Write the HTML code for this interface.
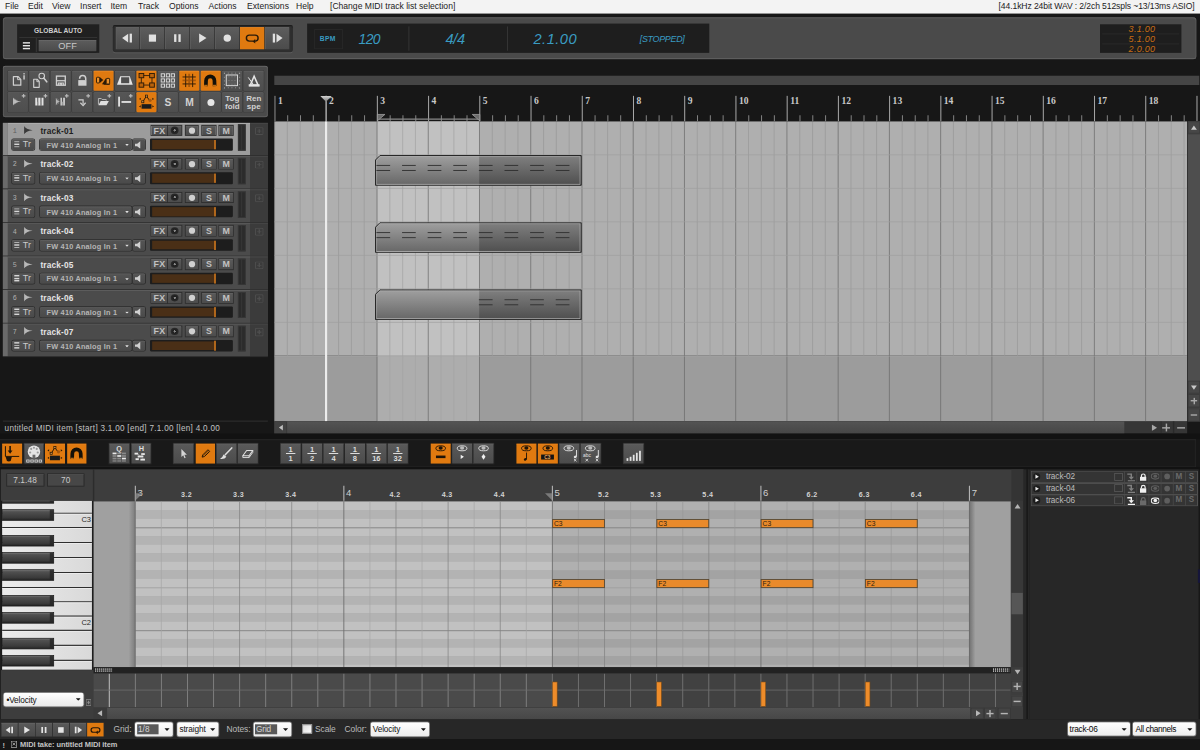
<!DOCTYPE html>
<html><head><meta charset="utf-8"><title>DAW</title><style>
html,body{margin:0;padding:0;background:#171717;overflow:hidden}
body{width:1200px;height:750px;position:relative}
#root{position:absolute;left:0;top:0;width:1680px;height:1050px;transform:scale(0.7142857);transform-origin:0 0;overflow:hidden;background:#171717;font-family:"Liberation Sans",sans-serif}
#root div,#root span,#root svg{position:absolute;box-sizing:border-box}
#root span{white-space:nowrap;line-height:1.15}
.menu{font:12px/17px "Liberation Sans",sans-serif;color:#1c1c1c}
</style></head><body><div id="root">
<!-- p1 -->
<div style="left:0px;top:0px;width:1680px;height:18.9px;background:#f3f3f3"></div>
<span class="menu" style="left:7px;top:2.1px;">File</span>
<span class="menu" style="left:39.2px;top:2.1px;">Edit</span>
<span class="menu" style="left:72.8px;top:2.1px;">View</span>
<span class="menu" style="left:112px;top:2.1px;">Insert</span>
<span class="menu" style="left:154.7px;top:2.1px;">Item</span>
<span class="menu" style="left:193.2px;top:2.1px;">Track</span>
<span class="menu" style="left:236.6px;top:2.1px;">Options</span>
<span class="menu" style="left:291.9px;top:2.1px;">Actions</span>
<span class="menu" style="left:345.8px;top:2.1px;">Extensions</span>
<span class="menu" style="left:414.4px;top:2.1px;">Help</span>
<span class="menu" style="left:462px;top:2.1px;">[Change MIDI track list selection]</span>
<span class="menu" style="right:7.7px;top:2.1px;letter-spacing:-0.14px">[44.1kHz 24bit WAV : 2/2ch 512spls ~13/13ms ASIO]</span>
<div style="left:4.2px;top:24.22px;width:1670.62px;height:58.66px;background:#4a4a4a;border-radius:5px;box-shadow:inset 0 1.4px 0 #626262, inset 1.4px 0 0 #585858, inset -1.4px 0 0 #585858,inset 0 -1.4px 0 #646464"></div>
<div style="left:24.22px;top:33.6px;width:114.38px;height:40.6px;background:#202020"></div>
<span style="left:24.22px;top:37.8px;width:114.38px;text-align:center;font:bold 9.3px 'Liberation Sans',sans-serif;color:#d0d0d0">GLOBAL AUTO</span>
<div style="left:26.6px;top:52.08px;width:109.2px;height:1.12px;background:#3a3a3a"></div>
<div style="left:50.4px;top:53.2px;width:1.12px;height:19.6px;background:#333"></div>
<div style="left:32.48px;top:58.52px;width:9.8px;height:2.1px;background:#e4e4e4"></div>
<div style="left:32.48px;top:62.58px;width:9.8px;height:2.1px;background:#e4e4e4"></div>
<div style="left:32.48px;top:66.64px;width:9.8px;height:2.1px;background:#e4e4e4"></div>
<div style="left:54.04px;top:56px;width:81.2px;height:15.68px;background:linear-gradient(#5c5c5c,#4b4b4b);box-shadow:inset 0 1px 0 #6a6a6a,0 1px 0 #111;"></div>
<span style="left:54.04px;top:55.86px;width:81.2px;text-align:center;font:13px 'Liberation Sans',sans-serif;color:#c8c8c8">OFF</span>
<div style="left:158.2px;top:35px;width:251.44px;height:37.52px;background:#2f2f2f;border-radius:3px;box-shadow:0 1.4px 0 #5e5e5e, inset 0 1.4px 2px #1a1a1a"></div>
<div style="left:161.56px;top:37.8px;width:33.88px;height:31.08px;background:linear-gradient(#5d5d5d,#4b4b4b);box-shadow:inset 0 1px 0 #6c6c6c, inset 1px 0 0 #606060"></div>
<div style="left:196.49px;top:37.8px;width:33.88px;height:31.08px;background:linear-gradient(#5d5d5d,#4b4b4b);box-shadow:inset 0 1px 0 #6c6c6c, inset 1px 0 0 #606060"></div>
<div style="left:231.42px;top:37.8px;width:33.88px;height:31.08px;background:linear-gradient(#5d5d5d,#4b4b4b);box-shadow:inset 0 1px 0 #6c6c6c, inset 1px 0 0 #606060"></div>
<div style="left:266.35px;top:37.8px;width:33.88px;height:31.08px;background:linear-gradient(#5d5d5d,#4b4b4b);box-shadow:inset 0 1px 0 #6c6c6c, inset 1px 0 0 #606060"></div>
<div style="left:301.28px;top:37.8px;width:33.88px;height:31.08px;background:linear-gradient(#5d5d5d,#4b4b4b);box-shadow:inset 0 1px 0 #6c6c6c, inset 1px 0 0 #606060"></div>
<div style="left:336.21px;top:37.8px;width:33.88px;height:31.08px;background:#e07a10;box-shadow:inset 0 1px 0 #f09030"></div>
<div style="left:371.14px;top:37.8px;width:33.88px;height:31.08px;background:linear-gradient(#5d5d5d,#4b4b4b);box-shadow:inset 0 1px 0 #6c6c6c, inset 1px 0 0 #606060"></div>
<svg style="left:0;top:0" width="600" height="90" viewBox="0 0 600 90"><path d="M171.0 53.339999999999996 L179.5 47.13999999999999 L179.5 59.54Z" fill="#e0e0e0"/><rect x="181.5" y="47.13999999999999" width="3.2" height="12.4" fill="#e0e0e0"/><rect x="208.42999999999998" y="48.339999999999996" width="10" height="10" fill="#e0e0e0"/><rect x="243.76" y="47.94" width="3.2" height="10.8" fill="#e0e0e0"/><rect x="249.76" y="47.94" width="3.2" height="10.8" fill="#e0e0e0"/><path d="M278.78999999999996 46.739999999999995 L289.09 53.339999999999996 L278.78999999999996 59.94Z" fill="#e0e0e0"/><circle cx="318.21999999999997" cy="53.339999999999996" r="5.2" fill="#e0e0e0"/><path d="M354.15 57.54 H349.15 a4.2 4.2 0 0 1 0 -8.4 H357.15 a4.2 4.2 0 0 1 0 8.4 H356.34999999999997" fill="none" stroke="#2a1a08" stroke-width="2"/><path d="M357.34999999999997 54.54 L353.34999999999997 57.739999999999995 L357.34999999999997 60.739999999999995Z" fill="#2a1a08"/><path d="M395.58000000000004 53.339999999999996 L387.08000000000004 47.13999999999999 L387.08000000000004 59.54Z" fill="#e0e0e0"/><rect x="381.88000000000005" y="47.13999999999999" width="3.2" height="12.4" fill="#e0e0e0"/></svg>
<div style="left:429.52px;top:33.32px;width:563.08px;height:40.46px;background:#1e1e1e"></div>
<div style="left:439.6px;top:40.6px;width:40.6px;height:28px;box-shadow:inset 0 0 0 1px #2b2b2b"></div>
<span style="left:447.72px;top:49.84px;font-style:italic;color:#3a9cc2;font-family:'Liberation Sans',sans-serif;font-style:normal;font-weight:bold;font-size:9.4px;letter-spacing:0.5px">BPM</span>
<span style="left:501.9px;top:42.28px;font-style:italic;color:#3a9cc2;font-family:'Liberation Sans',sans-serif;font-size:20.5px;letter-spacing:-1px;transform:scaleX(0.95);transform-origin:0 0">120</span>
<div style="left:571.62px;top:36.96px;width:1.26px;height:34.44px;background:#3e3e3e"></div>
<span style="left:623.7px;top:42.28px;font-style:italic;color:#3a9cc2;font-family:'Liberation Sans',sans-serif;font-size:20.5px;letter-spacing:-0.5px;">4/4</span>
<div style="left:710.22px;top:36.96px;width:1.26px;height:34.44px;background:#3e3e3e"></div>
<span style="left:746.9px;top:42.28px;font-style:italic;color:#3a9cc2;font-family:'Liberation Sans',sans-serif;font-size:20.5px;letter-spacing:0.65px;">2.1.00</span>
<span style="left:895.72px;top:48.16px;font-style:italic;color:#3a9cc2;font-family:'Liberation Sans',sans-serif;font-size:12.6px;letter-spacing:-0.5px;">[STOPPED]</span>
<div style="left:1540px;top:33.6px;width:114.24px;height:40.6px;background:#1e1e1e"></div>
<div style="left:1542.8px;top:46.76px;width:108.64px;height:0.98px;background:#2e2e2e"></div>
<div style="left:1542.8px;top:60.76px;width:108.64px;height:0.98px;background:#2e2e2e"></div>
<span style="left:1580.04px;top:34.16px;font-style:italic;color:#c86c14;font-family:'Liberation Sans',sans-serif;font-size:12.6px;letter-spacing:0.4px;">3.1.00</span>
<span style="left:1580.04px;top:48.16px;font-style:italic;color:#c86c14;font-family:'Liberation Sans',sans-serif;font-size:12.6px;letter-spacing:0.4px;">5.1.00</span>
<span style="left:1580.04px;top:62.16px;font-style:italic;color:#c86c14;font-family:'Liberation Sans',sans-serif;font-size:12.6px;letter-spacing:0.4px;">2.0.00</span>
<!-- p2 -->
<div style="left:4.2px;top:91.98px;width:371.28px;height:71.82px;background:#4a4a4a;border-radius:4px;box-shadow:inset 0 1.4px 0 #666, inset 1.4px 0 0 #5a5a5a, inset -1.4px 0 0 #5a5a5a, inset 0 -1.4px 0 #606060"></div>
<div style="left:11.06px;top:99.26px;width:28.28px;height:27.86px;background:linear-gradient(#565656,#4e4e4e);border-radius:1.5px;box-shadow:0 0 0 1px #3c3c3c, inset 0 1px 0 #626262"><svg style="left:0;top:0" width="100%" height="100%" viewBox="0 0 28 28"><path d="M7.6 8.2H14L18 12.2V20.4H7.6Z" fill="none" stroke="#cfcfcf" stroke-width="1.7" stroke-linejoin="round"/><path d="M13.6 8.4V12.6H17.8" fill="none" stroke="#cfcfcf" stroke-width="1.4"/><rect x="21.6" y="6.4" width="2" height="6" fill="#cfcfcf"/><rect x="21.6" y="3.4" width="2" height="1.8" fill="#cfcfcf"/></svg></div>
<div style="left:41.06px;top:99.26px;width:28.28px;height:27.86px;background:linear-gradient(#565656,#4e4e4e);border-radius:1.5px;box-shadow:0 0 0 1px #3c3c3c, inset 0 1px 0 #626262"><svg style="left:0;top:0" width="100%" height="100%" viewBox="0 0 28 28"><path d="M6 12H10.8L13.8 15V23.4H6Z" fill="none" stroke="#cfcfcf" stroke-width="1.6" stroke-linejoin="round"/><path d="M10.4 12.2V15.4H13.6" fill="none" stroke="#cfcfcf" stroke-width="1.3"/><circle cx="17.3" cy="7.4" r="3.9" fill="none" stroke="#cfcfcf" stroke-width="1.5"/><path d="M20 10.4L24.4 15.6" stroke="#cfcfcf" stroke-width="2.2" stroke-linecap="round"/></svg></div>
<div style="left:71.06px;top:99.26px;width:28.28px;height:27.86px;background:linear-gradient(#565656,#4e4e4e);border-radius:1.5px;box-shadow:0 0 0 1px #3c3c3c, inset 0 1px 0 #626262"><svg style="left:0;top:0" width="100%" height="100%" viewBox="0 0 28 28"><rect x="7.9" y="7.6" width="12.4" height="12.8" fill="none" stroke="#cfcfcf" stroke-width="1.9"/><rect x="7.9" y="13.2" width="12.4" height="1.8" fill="#cfcfcf"/><path d="M10.6 20.6V17.2H17.6V20.6M13 20.6V18.6H15.2V20.6" fill="none" stroke="#cfcfcf" stroke-width="1.5"/></svg></div>
<div style="left:101.07px;top:99.26px;width:28.28px;height:27.86px;background:linear-gradient(#565656,#4e4e4e);border-radius:1.5px;box-shadow:0 0 0 1px #3c3c3c, inset 0 1px 0 #626262"><svg style="left:0;top:0" width="100%" height="100%" viewBox="0 0 28 28"><rect x="8.4" y="13.2" width="11.6" height="7.9" fill="#cfcfcf"/><path d="M10.3 11.4V10.9A4.3 4.3 0 0 1 18.9 10.9V13.4" fill="none" stroke="#cfcfcf" stroke-width="2.1"/></svg></div>
<div style="left:131.07px;top:99.26px;width:28.28px;height:27.86px;background:#e07a10;border-radius:1.5px;box-shadow:inset 0 1px 0 #ee8c28"><svg style="left:0;top:0" width="100%" height="100%" viewBox="0 0 28 28"><path d="M8.4 8.9L13.4 13.1L8.4 17.3Z" fill="#2a1a08"/><path d="M17.3 10.5V18.9H11.6Z" fill="#2a1a08"/><rect x="3.9" y="9.2" width="4.5" height="8" rx="1" fill="#e8902c" stroke="#2a1a08" stroke-width="1.3"/><rect x="17.6" y="10.8" width="4.8" height="8" rx="1" fill="#e8902c" stroke="#2a1a08" stroke-width="1.3"/><path d="M14 19.2H22.6" stroke="#2a1a08" stroke-width="1.2"/></svg></div>
<div style="left:161.07px;top:99.26px;width:28.28px;height:27.86px;background:linear-gradient(#565656,#4e4e4e);border-radius:1.5px;box-shadow:0 0 0 1px #3c3c3c, inset 0 1px 0 #626262"><svg style="left:0;top:0" width="100%" height="100%" viewBox="0 0 28 28"><path d="M7.2 7.9H20.6L24.8 19.6H2.6Z" fill="#e4e4e4"/><rect x="8.4" y="9.2" width="11.4" height="8.4" fill="#4e4e4e"/></svg></div>
<div style="left:191.07px;top:99.26px;width:28.28px;height:27.86px;background:#e07a10;border-radius:1.5px;box-shadow:inset 0 1px 0 #ee8c28"><svg style="left:0;top:0" width="100%" height="100%" viewBox="0 0 28 28"><path d="M6.7 6.8H21.7V20.2H6.7Z" fill="none" stroke="#2a1a08" stroke-width="1.2"/><rect x="3.5" y="3.9" width="6.6" height="6" fill="#b9620c" stroke="#2a1a08" stroke-width="1.3"/><rect x="3.5" y="17.2" width="6.6" height="6" fill="#b9620c" stroke="#2a1a08" stroke-width="1.3"/><rect x="18.4" y="3.9" width="6.6" height="6" fill="#b9620c" stroke="#2a1a08" stroke-width="1.3"/><rect x="18.4" y="17.2" width="6.6" height="6" fill="#b9620c" stroke="#2a1a08" stroke-width="1.3"/></svg></div>
<div style="left:221.07px;top:99.26px;width:28.28px;height:27.86px;background:linear-gradient(#565656,#4e4e4e);border-radius:1.5px;box-shadow:0 0 0 1px #3c3c3c, inset 0 1px 0 #626262"><svg style="left:0;top:0" width="100%" height="100%" viewBox="0 0 28 28"><rect x="4.5" y="4.3" width="4.6" height="4.4" fill="#5a5a5a" stroke="#dcdcdc" stroke-width="1.3"/><rect x="4.5" y="11.5" width="4.6" height="4.4" fill="#5a5a5a" stroke="#dcdcdc" stroke-width="1.3"/><rect x="4.5" y="18.8" width="4.6" height="4.4" fill="#5a5a5a" stroke="#dcdcdc" stroke-width="1.3"/><rect x="11.7" y="4.3" width="4.6" height="4.4" fill="#5a5a5a" stroke="#dcdcdc" stroke-width="1.3"/><rect x="11.7" y="11.5" width="4.6" height="4.4" fill="#5a5a5a" stroke="#dcdcdc" stroke-width="1.3"/><rect x="11.7" y="18.8" width="4.6" height="4.4" fill="#5a5a5a" stroke="#dcdcdc" stroke-width="1.3"/><rect x="18.6" y="4.3" width="4.6" height="4.4" fill="#5a5a5a" stroke="#dcdcdc" stroke-width="1.3"/><rect x="18.6" y="11.5" width="4.6" height="4.4" fill="#5a5a5a" stroke="#dcdcdc" stroke-width="1.3"/><rect x="18.6" y="18.8" width="4.6" height="4.4" fill="#5a5a5a" stroke="#dcdcdc" stroke-width="1.3"/></svg></div>
<div style="left:251.08px;top:99.26px;width:28.28px;height:27.86px;background:#e07a10;border-radius:1.5px;box-shadow:inset 0 1px 0 #ee8c28"><svg style="left:0;top:0" width="100%" height="100%" viewBox="0 0 28 28"><path d="M4.4 8.8H23M4.4 18.6H23M8.8 4.4V23M18.6 4.4V23" stroke="#2a1a08" stroke-width="1.3"/><path d="M4.4 13.7H23M13.7 4.4V23" stroke="#7a3c06" stroke-width="2.6" opacity=".55"/></svg></div>
<div style="left:281.08px;top:99.26px;width:28.28px;height:27.86px;background:#e07a10;border-radius:1.5px;box-shadow:inset 0 1px 0 #ee8c28"><svg style="left:0;top:0" width="100%" height="100%" viewBox="0 0 28 28"><path d="M7 21.6L7.3 13.9A5.9 5.9 0 0 1 19.1 13.9L19.4 21.6" fill="none" stroke="#141008" stroke-width="5.2"/><rect x="4.6" y="19.8" width="4.8" height="2" fill="#b86a14"/><rect x="17" y="19.8" width="4.8" height="2" fill="#b86a14"/></svg></div>
<div style="left:311.08px;top:99.26px;width:28.28px;height:27.86px;background:linear-gradient(#565656,#4e4e4e);border-radius:1.5px;box-shadow:0 0 0 1px #3c3c3c, inset 0 1px 0 #626262"><svg style="left:0;top:0" width="100%" height="100%" viewBox="0 0 28 28"><rect x="5.6" y="6" width="15.8" height="15" fill="#5a5a5a" stroke="#d8d8d8" stroke-width="1.4"/><path d="M2.6 3.4H25M2.6 24H25" stroke="#aaa" stroke-width="1.2" stroke-dasharray="1.2 4"/><path d="M3 3.4V25M24.4 3.4V25" stroke="#aaa" stroke-width="1.2" stroke-dasharray="1.2 4"/><path d="M9.4 8V20M13.6 8V20M17.8 8V20" stroke="#999" stroke-width="1" stroke-dasharray="1.2 4"/></svg></div>
<div style="left:341.08px;top:99.26px;width:28.28px;height:27.86px;background:linear-gradient(#565656,#4e4e4e);border-radius:1.5px;box-shadow:0 0 0 1px #3c3c3c, inset 0 1px 0 #626262"><svg style="left:0;top:0" width="100%" height="100%" viewBox="0 0 28 28"><path d="M14.6 7.8L9 20.6H20.4Z" fill="none" stroke="#e4e4e4" stroke-width="2.2" stroke-linejoin="miter"/><path d="M7 22.2H22.4V19.2H7Z" fill="#e4e4e4"/><path d="M6.4 9.4L13.6 19.6" stroke="#e4e4e4" stroke-width="1.4"/></svg></div>
<div style="left:11.06px;top:129.22px;width:28.28px;height:27.72px;background:linear-gradient(#565656,#4e4e4e);border-radius:1.5px;box-shadow:0 0 0 1px #3c3c3c, inset 0 1px 0 #626262"><svg style="left:0;top:0" width="100%" height="100%" viewBox="0 0 28 28"><path d="M7 7.4Q9 12.2 18.6 13.2Q9 14.2 7 19Z" fill="#cfcfcf" opacity=".8"/><path d="M8.4 8.4V18M10.4 9.6V16.8M12.4 10.8V15.6" stroke="#cfcfcf" stroke-width="1" opacity=".55"/><path d="M19.4 5.3H24.6M22 2.6999999999999997V7.9" stroke="#cfcfcf" stroke-width="1.5" opacity=".85"/></svg></div>
<div style="left:41.06px;top:129.22px;width:28.28px;height:27.72px;background:linear-gradient(#565656,#4e4e4e);border-radius:1.5px;box-shadow:0 0 0 1px #3c3c3c, inset 0 1px 0 #626262"><svg style="left:0;top:0" width="100%" height="100%" viewBox="0 0 28 28"><rect x="8.2" y="7.9" width="2.8" height="11" fill="#e2e2e2"/><rect x="12.4" y="7.9" width="3.1" height="11" fill="#e2e2e2"/><rect x="17" y="7.9" width="2.8" height="11" fill="#e2e2e2"/><rect x="11" y="13.6" width="1.4" height="5.3" fill="#999"/><rect x="15.5" y="13.6" width="1.5" height="5.3" fill="#999"/><path d="M20.0 5.3H25.200000000000003M22.6 2.6999999999999997V7.9" stroke="#cfcfcf" stroke-width="1.5" opacity=".85"/></svg></div>
<div style="left:71.06px;top:129.22px;width:28.28px;height:27.72px;background:linear-gradient(#565656,#4e4e4e);border-radius:1.5px;box-shadow:0 0 0 1px #3c3c3c, inset 0 1px 0 #626262"><svg style="left:0;top:0" width="100%" height="100%" viewBox="0 0 28 28"><path d="M7 7.8Q8.4 12.4 13.4 13.4Q8.4 14.4 7 19Z" fill="#cfcfcf" opacity=".75"/><path d="M8.4 8.6V18.2M10.4 10V16.8" stroke="#cfcfcf" stroke-width="1" opacity=".5"/><rect x="13.6" y="7.9" width="1.9" height="11" fill="#dcdcdc"/><rect x="17.4" y="7.9" width="2.3" height="11" fill="#dcdcdc"/><rect x="15.5" y="13.6" width="1.9" height="5.3" fill="#999"/><path d="M19.799999999999997 5.3H25.0M22.4 2.6999999999999997V7.9" stroke="#cfcfcf" stroke-width="1.5" opacity=".85"/></svg></div>
<div style="left:101.07px;top:129.22px;width:28.28px;height:27.72px;background:linear-gradient(#565656,#4e4e4e);border-radius:1.5px;box-shadow:0 0 0 1px #3c3c3c, inset 0 1px 0 #626262"><svg style="left:0;top:0" width="100%" height="100%" viewBox="0 0 28 28"><path d="M8.6 10.8H15.2V17.6" fill="none" stroke="#cfcfcf" stroke-width="1.7"/><path d="M11.4 15L15.2 19L18.8 15" fill="none" stroke="#cfcfcf" stroke-width="1.7"/><path d="M19.799999999999997 5.3H25.0M22.4 2.6999999999999997V7.9" stroke="#cfcfcf" stroke-width="1.5" opacity=".85"/></svg></div>
<div style="left:131.07px;top:129.22px;width:28.28px;height:27.72px;background:linear-gradient(#565656,#4e4e4e);border-radius:1.5px;box-shadow:0 0 0 1px #3c3c3c, inset 0 1px 0 #626262"><svg style="left:0;top:0" width="100%" height="100%" viewBox="0 0 28 28"><path d="M6.6 17.6V9H10.6L11.8 10.4H17.6V12" fill="none" stroke="#bdbdbd" stroke-width="1.3"/><path d="M9.8 12.4H21.4L18 18.6H6.6Z" fill="#e0e0e0"/><path d="M19.4 5.3H24.6M22 2.6999999999999997V7.9" stroke="#cfcfcf" stroke-width="1.5" opacity=".85"/></svg></div>
<div style="left:161.07px;top:129.22px;width:28.28px;height:27.72px;background:linear-gradient(#565656,#4e4e4e);border-radius:1.5px;box-shadow:0 0 0 1px #3c3c3c, inset 0 1px 0 #626262"><svg style="left:0;top:0" width="100%" height="100%" viewBox="0 0 28 28"><rect x="4.2" y="6.4" width="2.6" height="14" fill="#e0e0e0"/><rect x="8.9" y="12.6" width="13.6" height="2.6" fill="#e0e0e0"/><path d="M19.4 5.3H24.6M22 2.6999999999999997V7.9" stroke="#cfcfcf" stroke-width="1.5" opacity=".85"/></svg></div>
<div style="left:191.07px;top:129.22px;width:28.28px;height:27.72px;background:#e07a10;border-radius:1.5px;box-shadow:inset 0 1px 0 #ee8c28"><svg style="left:0;top:0" width="100%" height="100%" viewBox="0 0 28 28"><path d="M8.8 13.6L13.8 5.6L18.6 12" fill="none" stroke="#2a1a08" stroke-width="1.4"/><rect x="7.2" y="12.2" width="3" height="2.8" fill="#e8a050" stroke="#2a1a08" stroke-width="1.1"/><rect x="12.4" y="4.2" width="3" height="2.8" fill="#e8a050" stroke="#2a1a08" stroke-width="1.1"/><circle cx="19" cy="11.6" r="2.3" fill="#a85a10"/><rect x="7" y="17" width="14" height="6.4" fill="#1c1c1c"/><path d="M3.4 9.6L5.8 8V11.2ZM24.6 9.6L22.2 8V11.2ZM3.4 20.2L5.8 18.6V21.8ZM24.6 20.2L22.2 18.6V21.8Z" fill="#2a1a08"/></svg></div>
<div style="left:221.07px;top:129.22px;width:28.28px;height:27.72px;background:linear-gradient(#565656,#4e4e4e);border-radius:1.5px;box-shadow:0 0 0 1px #3c3c3c, inset 0 1px 0 #626262"></div>
<div style="left:251.08px;top:129.22px;width:28.28px;height:27.72px;background:linear-gradient(#565656,#4e4e4e);border-radius:1.5px;box-shadow:0 0 0 1px #3c3c3c, inset 0 1px 0 #626262"></div>
<div style="left:281.08px;top:129.22px;width:28.28px;height:27.72px;background:linear-gradient(#565656,#4e4e4e);border-radius:1.5px;box-shadow:0 0 0 1px #3c3c3c, inset 0 1px 0 #626262"><svg style="left:0;top:0" width="100%" height="100%" viewBox="0 0 28 28"><circle cx="14.2" cy="14.6" r="5" fill="#e6e6e6"/></svg></div>
<div style="left:311.08px;top:129.22px;width:28.28px;height:27.72px;background:linear-gradient(#565656,#4e4e4e);border-radius:1.5px;box-shadow:0 0 0 1px #3c3c3c, inset 0 1px 0 #626262"></div>
<div style="left:341.08px;top:129.22px;width:28.28px;height:27.72px;background:linear-gradient(#565656,#4e4e4e);border-radius:1.5px;box-shadow:0 0 0 1px #3c3c3c, inset 0 1px 0 #626262"></div>
<span style="left:221.07px;top:134.54px;color:#d2d2d2;font-weight:bold;font-family:'Liberation Sans',sans-serif;text-align:center;width:28.28px;font-size:14.4px">S</span>
<span style="left:251.08px;top:134.54px;color:#d2d2d2;font-weight:bold;font-family:'Liberation Sans',sans-serif;text-align:center;width:28.28px;font-size:14.4px">M</span>
<span style="left:311.08px;top:132.3px;color:#d2d2d2;font-weight:bold;font-family:'Liberation Sans',sans-serif;text-align:center;width:28.28px;font-size:11.2px;line-height:10.4px;letter-spacing:0px">Tog<br>fold</span>
<span style="left:341.08px;top:132.3px;color:#d2d2d2;font-weight:bold;font-family:'Liberation Sans',sans-serif;text-align:center;width:28.28px;font-size:11.2px;line-height:10.4px;letter-spacing:0px">Ren<br>spe</span>
<!-- p3 -->
<div style="left:4.2px;top:171.5px;width:371.28px;height:327.74px;background:#474747"></div>
<div style="left:4.48px;top:171.5px;width:6.16px;height:46.06px;background:#8a8a8a"></div>
<div style="left:10.64px;top:171.5px;width:339.36px;height:46.06px;background:#9c9c9c;box-shadow:inset 0 1.4px 0 #b0b0b0"></div>
<div style="left:350px;top:171.5px;width:25.48px;height:46.06px;background:#3b3b3b;box-shadow:inset 0 1.4px 0 #484848"></div>
<div style="left:4.48px;top:217.28px;width:371px;height:1.4px;background:#2a2a2a"></div>
<div style="left:357px;top:177.94px;width:12.04px;height:11.2px;border-radius:2px;box-shadow:inset 0 0 0 1.3px #4e4e4e"><div style="left:50%;top:25%;width:1.2px;height:50%;background:#4e4e4e;margin-left:-.6px"></div><div style="top:50%;left:25%;height:1.2px;width:50%;background:#4e4e4e;margin-top:-.6px"></div></div>
<span style="left:17.92px;top:177.94px;font:9.4px 'Liberation Mono',monospace;color:#5e5e5e">1</span>
<svg style="left:32.9px;top:175.98px;" width="13.30" height="12.32" viewBox="0 0 13.30 12.32"><path d="M0.8 0.4Q2.6 5 12.8 6.2Q2.6 7.4 0.8 12Z" fill="#3a3a3a"/><path d="M2.4 2.6V9.8M4.2 3.6V8.8" stroke="#3a3a3a" stroke-width="1" opacity=".6"/></svg>
<span style="left:56.56px;top:176.4px;font:bold 11.6px 'Liberation Sans',sans-serif;color:#1e1e1e;letter-spacing:0.25px">track-01</span>
<div style="left:16.8px;top:195.3px;width:31.08px;height:14.56px;background:linear-gradient(#545454,#4a4a4a);border-radius:2px;box-shadow:0 0 0 1.2px #2c2c2c, inset 0 1px 0 #606060"></div>
<div style="left:19.6px;top:197.82px;width:7.56px;height:1.68px;background:#d6d6d6"></div>
<div style="left:19.6px;top:201.32px;width:7.56px;height:1.68px;background:#d6d6d6"></div>
<div style="left:19.6px;top:204.82px;width:7.56px;height:1.68px;background:#d6d6d6"></div>
<span style="left:31.92px;top:195.3px;font:12.6px 'Liberation Sans',sans-serif;color:#cacaca">Tr</span>
<div style="left:56px;top:195.3px;width:127.96px;height:14.56px;background:linear-gradient(#545454,#4a4a4a);border-radius:2px;box-shadow:0 0 0 1.2px #2c2c2c, inset 0 1px 0 #606060"></div>
<span style="left:65.24px;top:197.82px;font:bold 10.2px 'Liberation Sans',sans-serif;color:#b6b6b6;letter-spacing:0.32px">FW 410 Analog In 1</span>
<svg style="left:175.28px;top:201.18px;" width="5.60" height="3.64" viewBox="0 0 5.60 3.64"><path d="M0.3 0.5H5.3L2.8 3.4Z" fill="#e0e0e0"/></svg>
<div style="left:185.92px;top:195.3px;width:16.8px;height:14.56px;background:linear-gradient(#545454,#4a4a4a);border-radius:2px;box-shadow:0 0 0 1.2px #2c2c2c, inset 0 1px 0 #606060"></div>
<svg style="left:188.44px;top:196.7px;" width="11.76" height="11.76" viewBox="0 0 11.76 11.76"><path d="M1 4.2H4L8.4 0.6V11.2L4 7.6H1Z" fill="#d0d0d0"/></svg>
<div style="left:211.96px;top:175.7px;width:22.26px;height:13.58px;background:linear-gradient(#5a5a5a,#4c4c4c);box-shadow:0 0 0 1.2px #2c2c2c, inset 0 1px 0 #686868"></div>
<span style="left:211.96px;top:175.84px;width:22.96px;text-align:center;font:bold 12.4px 'Liberation Sans',sans-serif;color:#c2c2c2;letter-spacing:0.7px">FX</span>
<div style="left:235.48px;top:175.7px;width:18.2px;height:13.58px;background:linear-gradient(#5a5a5a,#4c4c4c);box-shadow:0 0 0 1.2px #2c2c2c, inset 0 1px 0 #686868"><div style="left:50%;top:50%;width:10.4px;height:10.4px;margin:-5.2px 0 0 -5.2px;border-radius:50%;background:radial-gradient(circle,#888 0,#888 18%,#1c1c1c 24%,#2c2c2c 70%,#3c3c3c 100%)"></div></div>
<div style="left:259.56px;top:175.7px;width:17.64px;height:13.58px;background:linear-gradient(#5a5a5a,#4c4c4c);box-shadow:0 0 0 1.2px #2c2c2c, inset 0 1px 0 #686868"><svg style="left:0;top:0" width="100%" height="100%" viewBox="0 0 17.64 13.58"><circle cx="8.8" cy="6.9" r="4.4" fill="#d0d0d0"/></svg></div>
<div style="left:283.36px;top:175.7px;width:18.34px;height:13.58px;background:linear-gradient(#5a5a5a,#4c4c4c);box-shadow:0 0 0 1.2px #2c2c2c, inset 0 1px 0 #686868"></div>
<span style="left:283.36px;top:175.84px;width:18.34px;text-align:center;font:bold 12.4px 'Liberation Sans',sans-serif;color:#c2c2c2">S</span>
<div style="left:307.44px;top:175.7px;width:18.2px;height:13.58px;background:linear-gradient(#5a5a5a,#4c4c4c);box-shadow:0 0 0 1.2px #2c2c2c, inset 0 1px 0 #686868"></div>
<span style="left:307.44px;top:175.84px;width:18.2px;text-align:center;font:bold 12.4px 'Liberation Sans',sans-serif;color:#c2c2c2">M</span>
<div style="left:210.28px;top:194.32px;width:116.2px;height:16.38px;background:#1d1d1d;border-radius:1.5px"></div>
<div style="left:212.52px;top:196.42px;width:87.64px;height:12.32px;background:#4a2f16"></div>
<div style="left:299.88px;top:195.86px;width:2.52px;height:13.44px;background:#e8841c"></div>
<div style="left:332.64px;top:174.3px;width:11.48px;height:36.68px;background:#2b2b2b;box-shadow:inset 0 0 0 1.2px #3a3a3a"><div style="left:50%;top:1.4px;bottom:1.4px;width:1.2px;margin-left:-.6px;background:#3c3c3c"></div></div>
<div style="left:4.48px;top:218.4px;width:6.16px;height:46.06px;background:#6a6a6a"></div>
<div style="left:10.64px;top:218.4px;width:339.36px;height:46.06px;background:#4b4b4b;box-shadow:inset 0 1.4px 0 #5c5c5c"></div>
<div style="left:350px;top:218.4px;width:25.48px;height:46.06px;background:#3b3b3b;box-shadow:inset 0 1.4px 0 #484848"></div>
<div style="left:4.48px;top:264.18px;width:371px;height:1.4px;background:#2a2a2a"></div>
<div style="left:357px;top:224.84px;width:12.04px;height:11.2px;border-radius:2px;box-shadow:inset 0 0 0 1.3px #4e4e4e"><div style="left:50%;top:25%;width:1.2px;height:50%;background:#4e4e4e;margin-left:-.6px"></div><div style="top:50%;left:25%;height:1.2px;width:50%;background:#4e4e4e;margin-top:-.6px"></div></div>
<span style="left:17.92px;top:224.84px;font:9.4px 'Liberation Mono',monospace;color:#b0b0b0">2</span>
<svg style="left:32.9px;top:222.88px;" width="13.30" height="12.32" viewBox="0 0 13.30 12.32"><path d="M0.8 0.4Q2.6 5 12.8 6.2Q2.6 7.4 0.8 12Z" fill="#b8b8b8"/><path d="M2.4 2.6V9.8M4.2 3.6V8.8" stroke="#b8b8b8" stroke-width="1" opacity=".6"/></svg>
<span style="left:56.56px;top:223.3px;font:bold 11.6px 'Liberation Sans',sans-serif;color:#e4e4e4;letter-spacing:0.25px">track-02</span>
<div style="left:16.8px;top:242.2px;width:31.08px;height:14.56px;background:linear-gradient(#545454,#4a4a4a);border-radius:2px;box-shadow:0 0 0 1.2px #2c2c2c, inset 0 1px 0 #606060"></div>
<div style="left:19.6px;top:244.72px;width:7.56px;height:1.68px;background:#d6d6d6"></div>
<div style="left:19.6px;top:248.22px;width:7.56px;height:1.68px;background:#d6d6d6"></div>
<div style="left:19.6px;top:251.72px;width:7.56px;height:1.68px;background:#d6d6d6"></div>
<span style="left:31.92px;top:242.2px;font:12.6px 'Liberation Sans',sans-serif;color:#cacaca">Tr</span>
<div style="left:56px;top:242.2px;width:127.96px;height:14.56px;background:linear-gradient(#545454,#4a4a4a);border-radius:2px;box-shadow:0 0 0 1.2px #2c2c2c, inset 0 1px 0 #606060"></div>
<span style="left:65.24px;top:244.72px;font:bold 10.2px 'Liberation Sans',sans-serif;color:#b6b6b6;letter-spacing:0.32px">FW 410 Analog In 1</span>
<svg style="left:175.28px;top:248.08px;" width="5.60" height="3.64" viewBox="0 0 5.60 3.64"><path d="M0.3 0.5H5.3L2.8 3.4Z" fill="#e0e0e0"/></svg>
<div style="left:185.92px;top:242.2px;width:16.8px;height:14.56px;background:linear-gradient(#545454,#4a4a4a);border-radius:2px;box-shadow:0 0 0 1.2px #2c2c2c, inset 0 1px 0 #606060"></div>
<svg style="left:188.44px;top:243.6px;" width="11.76" height="11.76" viewBox="0 0 11.76 11.76"><path d="M1 4.2H4L8.4 0.6V11.2L4 7.6H1Z" fill="#d0d0d0"/></svg>
<div style="left:211.96px;top:222.6px;width:22.26px;height:13.58px;background:linear-gradient(#5a5a5a,#4c4c4c);box-shadow:0 0 0 1.2px #2c2c2c, inset 0 1px 0 #686868"></div>
<span style="left:211.96px;top:222.74px;width:22.96px;text-align:center;font:bold 12.4px 'Liberation Sans',sans-serif;color:#c2c2c2;letter-spacing:0.7px">FX</span>
<div style="left:235.48px;top:222.6px;width:18.2px;height:13.58px;background:linear-gradient(#5a5a5a,#4c4c4c);box-shadow:0 0 0 1.2px #2c2c2c, inset 0 1px 0 #686868"><div style="left:50%;top:50%;width:10.4px;height:10.4px;margin:-5.2px 0 0 -5.2px;border-radius:50%;background:radial-gradient(circle,#888 0,#888 18%,#1c1c1c 24%,#2c2c2c 70%,#3c3c3c 100%)"></div></div>
<div style="left:259.56px;top:222.6px;width:17.64px;height:13.58px;background:linear-gradient(#5a5a5a,#4c4c4c);box-shadow:0 0 0 1.2px #2c2c2c, inset 0 1px 0 #686868"><svg style="left:0;top:0" width="100%" height="100%" viewBox="0 0 17.64 13.58"><circle cx="8.8" cy="6.9" r="4.4" fill="#d0d0d0"/></svg></div>
<div style="left:283.36px;top:222.6px;width:18.34px;height:13.58px;background:linear-gradient(#5a5a5a,#4c4c4c);box-shadow:0 0 0 1.2px #2c2c2c, inset 0 1px 0 #686868"></div>
<span style="left:283.36px;top:222.74px;width:18.34px;text-align:center;font:bold 12.4px 'Liberation Sans',sans-serif;color:#c2c2c2">S</span>
<div style="left:307.44px;top:222.6px;width:18.2px;height:13.58px;background:linear-gradient(#5a5a5a,#4c4c4c);box-shadow:0 0 0 1.2px #2c2c2c, inset 0 1px 0 #686868"></div>
<span style="left:307.44px;top:222.74px;width:18.2px;text-align:center;font:bold 12.4px 'Liberation Sans',sans-serif;color:#c2c2c2">M</span>
<div style="left:210.28px;top:241.22px;width:116.2px;height:16.38px;background:#1d1d1d;border-radius:1.5px"></div>
<div style="left:212.52px;top:243.32px;width:87.64px;height:12.32px;background:#4a2f16"></div>
<div style="left:299.88px;top:242.76px;width:2.52px;height:13.44px;background:#e8841c"></div>
<div style="left:332.64px;top:221.2px;width:11.48px;height:36.68px;background:#2b2b2b;box-shadow:inset 0 0 0 1.2px #3a3a3a"><div style="left:50%;top:1.4px;bottom:1.4px;width:1.2px;margin-left:-.6px;background:#3c3c3c"></div></div>
<div style="left:4.48px;top:265.3px;width:6.16px;height:46.06px;background:#6a6a6a"></div>
<div style="left:10.64px;top:265.3px;width:339.36px;height:46.06px;background:#4b4b4b;box-shadow:inset 0 1.4px 0 #5c5c5c"></div>
<div style="left:350px;top:265.3px;width:25.48px;height:46.06px;background:#3b3b3b;box-shadow:inset 0 1.4px 0 #484848"></div>
<div style="left:4.48px;top:311.08px;width:371px;height:1.4px;background:#2a2a2a"></div>
<div style="left:357px;top:271.74px;width:12.04px;height:11.2px;border-radius:2px;box-shadow:inset 0 0 0 1.3px #4e4e4e"><div style="left:50%;top:25%;width:1.2px;height:50%;background:#4e4e4e;margin-left:-.6px"></div><div style="top:50%;left:25%;height:1.2px;width:50%;background:#4e4e4e;margin-top:-.6px"></div></div>
<span style="left:17.92px;top:271.74px;font:9.4px 'Liberation Mono',monospace;color:#b0b0b0">3</span>
<svg style="left:32.9px;top:269.78px;" width="13.30" height="12.32" viewBox="0 0 13.30 12.32"><path d="M0.8 0.4Q2.6 5 12.8 6.2Q2.6 7.4 0.8 12Z" fill="#b8b8b8"/><path d="M2.4 2.6V9.8M4.2 3.6V8.8" stroke="#b8b8b8" stroke-width="1" opacity=".6"/></svg>
<span style="left:56.56px;top:270.2px;font:bold 11.6px 'Liberation Sans',sans-serif;color:#e4e4e4;letter-spacing:0.25px">track-03</span>
<div style="left:16.8px;top:289.1px;width:31.08px;height:14.56px;background:linear-gradient(#545454,#4a4a4a);border-radius:2px;box-shadow:0 0 0 1.2px #2c2c2c, inset 0 1px 0 #606060"></div>
<div style="left:19.6px;top:291.62px;width:7.56px;height:1.68px;background:#d6d6d6"></div>
<div style="left:19.6px;top:295.12px;width:7.56px;height:1.68px;background:#d6d6d6"></div>
<div style="left:19.6px;top:298.62px;width:7.56px;height:1.68px;background:#d6d6d6"></div>
<span style="left:31.92px;top:289.1px;font:12.6px 'Liberation Sans',sans-serif;color:#cacaca">Tr</span>
<div style="left:56px;top:289.1px;width:127.96px;height:14.56px;background:linear-gradient(#545454,#4a4a4a);border-radius:2px;box-shadow:0 0 0 1.2px #2c2c2c, inset 0 1px 0 #606060"></div>
<span style="left:65.24px;top:291.62px;font:bold 10.2px 'Liberation Sans',sans-serif;color:#b6b6b6;letter-spacing:0.32px">FW 410 Analog In 1</span>
<svg style="left:175.28px;top:294.98px;" width="5.60" height="3.64" viewBox="0 0 5.60 3.64"><path d="M0.3 0.5H5.3L2.8 3.4Z" fill="#e0e0e0"/></svg>
<div style="left:185.92px;top:289.1px;width:16.8px;height:14.56px;background:linear-gradient(#545454,#4a4a4a);border-radius:2px;box-shadow:0 0 0 1.2px #2c2c2c, inset 0 1px 0 #606060"></div>
<svg style="left:188.44px;top:290.5px;" width="11.76" height="11.76" viewBox="0 0 11.76 11.76"><path d="M1 4.2H4L8.4 0.6V11.2L4 7.6H1Z" fill="#d0d0d0"/></svg>
<div style="left:211.96px;top:269.5px;width:22.26px;height:13.58px;background:linear-gradient(#5a5a5a,#4c4c4c);box-shadow:0 0 0 1.2px #2c2c2c, inset 0 1px 0 #686868"></div>
<span style="left:211.96px;top:269.64px;width:22.96px;text-align:center;font:bold 12.4px 'Liberation Sans',sans-serif;color:#c2c2c2;letter-spacing:0.7px">FX</span>
<div style="left:235.48px;top:269.5px;width:18.2px;height:13.58px;background:linear-gradient(#5a5a5a,#4c4c4c);box-shadow:0 0 0 1.2px #2c2c2c, inset 0 1px 0 #686868"><div style="left:50%;top:50%;width:10.4px;height:10.4px;margin:-5.2px 0 0 -5.2px;border-radius:50%;background:radial-gradient(circle,#888 0,#888 18%,#1c1c1c 24%,#2c2c2c 70%,#3c3c3c 100%)"></div></div>
<div style="left:259.56px;top:269.5px;width:17.64px;height:13.58px;background:linear-gradient(#5a5a5a,#4c4c4c);box-shadow:0 0 0 1.2px #2c2c2c, inset 0 1px 0 #686868"><svg style="left:0;top:0" width="100%" height="100%" viewBox="0 0 17.64 13.58"><circle cx="8.8" cy="6.9" r="4.4" fill="#d0d0d0"/></svg></div>
<div style="left:283.36px;top:269.5px;width:18.34px;height:13.58px;background:linear-gradient(#5a5a5a,#4c4c4c);box-shadow:0 0 0 1.2px #2c2c2c, inset 0 1px 0 #686868"></div>
<span style="left:283.36px;top:269.64px;width:18.34px;text-align:center;font:bold 12.4px 'Liberation Sans',sans-serif;color:#c2c2c2">S</span>
<div style="left:307.44px;top:269.5px;width:18.2px;height:13.58px;background:linear-gradient(#5a5a5a,#4c4c4c);box-shadow:0 0 0 1.2px #2c2c2c, inset 0 1px 0 #686868"></div>
<span style="left:307.44px;top:269.64px;width:18.2px;text-align:center;font:bold 12.4px 'Liberation Sans',sans-serif;color:#c2c2c2">M</span>
<div style="left:210.28px;top:288.12px;width:116.2px;height:16.38px;background:#1d1d1d;border-radius:1.5px"></div>
<div style="left:212.52px;top:290.22px;width:87.64px;height:12.32px;background:#4a2f16"></div>
<div style="left:299.88px;top:289.66px;width:2.52px;height:13.44px;background:#e8841c"></div>
<div style="left:332.64px;top:268.1px;width:11.48px;height:36.68px;background:#2b2b2b;box-shadow:inset 0 0 0 1.2px #3a3a3a"><div style="left:50%;top:1.4px;bottom:1.4px;width:1.2px;margin-left:-.6px;background:#3c3c3c"></div></div>
<div style="left:4.48px;top:312.2px;width:6.16px;height:46.06px;background:#6a6a6a"></div>
<div style="left:10.64px;top:312.2px;width:339.36px;height:46.06px;background:#4b4b4b;box-shadow:inset 0 1.4px 0 #5c5c5c"></div>
<div style="left:350px;top:312.2px;width:25.48px;height:46.06px;background:#3b3b3b;box-shadow:inset 0 1.4px 0 #484848"></div>
<div style="left:4.48px;top:357.98px;width:371px;height:1.4px;background:#2a2a2a"></div>
<div style="left:357px;top:318.64px;width:12.04px;height:11.2px;border-radius:2px;box-shadow:inset 0 0 0 1.3px #4e4e4e"><div style="left:50%;top:25%;width:1.2px;height:50%;background:#4e4e4e;margin-left:-.6px"></div><div style="top:50%;left:25%;height:1.2px;width:50%;background:#4e4e4e;margin-top:-.6px"></div></div>
<span style="left:17.92px;top:318.64px;font:9.4px 'Liberation Mono',monospace;color:#b0b0b0">4</span>
<svg style="left:32.9px;top:316.68px;" width="13.30" height="12.32" viewBox="0 0 13.30 12.32"><path d="M0.8 0.4Q2.6 5 12.8 6.2Q2.6 7.4 0.8 12Z" fill="#b8b8b8"/><path d="M2.4 2.6V9.8M4.2 3.6V8.8" stroke="#b8b8b8" stroke-width="1" opacity=".6"/></svg>
<span style="left:56.56px;top:317.1px;font:bold 11.6px 'Liberation Sans',sans-serif;color:#e4e4e4;letter-spacing:0.25px">track-04</span>
<div style="left:16.8px;top:336px;width:31.08px;height:14.56px;background:linear-gradient(#545454,#4a4a4a);border-radius:2px;box-shadow:0 0 0 1.2px #2c2c2c, inset 0 1px 0 #606060"></div>
<div style="left:19.6px;top:338.52px;width:7.56px;height:1.68px;background:#d6d6d6"></div>
<div style="left:19.6px;top:342.02px;width:7.56px;height:1.68px;background:#d6d6d6"></div>
<div style="left:19.6px;top:345.52px;width:7.56px;height:1.68px;background:#d6d6d6"></div>
<span style="left:31.92px;top:336px;font:12.6px 'Liberation Sans',sans-serif;color:#cacaca">Tr</span>
<div style="left:56px;top:336px;width:127.96px;height:14.56px;background:linear-gradient(#545454,#4a4a4a);border-radius:2px;box-shadow:0 0 0 1.2px #2c2c2c, inset 0 1px 0 #606060"></div>
<span style="left:65.24px;top:338.52px;font:bold 10.2px 'Liberation Sans',sans-serif;color:#b6b6b6;letter-spacing:0.32px">FW 410 Analog In 1</span>
<svg style="left:175.28px;top:341.88px;" width="5.60" height="3.64" viewBox="0 0 5.60 3.64"><path d="M0.3 0.5H5.3L2.8 3.4Z" fill="#e0e0e0"/></svg>
<div style="left:185.92px;top:336px;width:16.8px;height:14.56px;background:linear-gradient(#545454,#4a4a4a);border-radius:2px;box-shadow:0 0 0 1.2px #2c2c2c, inset 0 1px 0 #606060"></div>
<svg style="left:188.44px;top:337.4px;" width="11.76" height="11.76" viewBox="0 0 11.76 11.76"><path d="M1 4.2H4L8.4 0.6V11.2L4 7.6H1Z" fill="#d0d0d0"/></svg>
<div style="left:211.96px;top:316.4px;width:22.26px;height:13.58px;background:linear-gradient(#5a5a5a,#4c4c4c);box-shadow:0 0 0 1.2px #2c2c2c, inset 0 1px 0 #686868"></div>
<span style="left:211.96px;top:316.54px;width:22.96px;text-align:center;font:bold 12.4px 'Liberation Sans',sans-serif;color:#c2c2c2;letter-spacing:0.7px">FX</span>
<div style="left:235.48px;top:316.4px;width:18.2px;height:13.58px;background:linear-gradient(#5a5a5a,#4c4c4c);box-shadow:0 0 0 1.2px #2c2c2c, inset 0 1px 0 #686868"><div style="left:50%;top:50%;width:10.4px;height:10.4px;margin:-5.2px 0 0 -5.2px;border-radius:50%;background:radial-gradient(circle,#888 0,#888 18%,#1c1c1c 24%,#2c2c2c 70%,#3c3c3c 100%)"></div></div>
<div style="left:259.56px;top:316.4px;width:17.64px;height:13.58px;background:linear-gradient(#5a5a5a,#4c4c4c);box-shadow:0 0 0 1.2px #2c2c2c, inset 0 1px 0 #686868"><svg style="left:0;top:0" width="100%" height="100%" viewBox="0 0 17.64 13.58"><circle cx="8.8" cy="6.9" r="4.4" fill="#d0d0d0"/></svg></div>
<div style="left:283.36px;top:316.4px;width:18.34px;height:13.58px;background:linear-gradient(#5a5a5a,#4c4c4c);box-shadow:0 0 0 1.2px #2c2c2c, inset 0 1px 0 #686868"></div>
<span style="left:283.36px;top:316.54px;width:18.34px;text-align:center;font:bold 12.4px 'Liberation Sans',sans-serif;color:#c2c2c2">S</span>
<div style="left:307.44px;top:316.4px;width:18.2px;height:13.58px;background:linear-gradient(#5a5a5a,#4c4c4c);box-shadow:0 0 0 1.2px #2c2c2c, inset 0 1px 0 #686868"></div>
<span style="left:307.44px;top:316.54px;width:18.2px;text-align:center;font:bold 12.4px 'Liberation Sans',sans-serif;color:#c2c2c2">M</span>
<div style="left:210.28px;top:335.02px;width:116.2px;height:16.38px;background:#1d1d1d;border-radius:1.5px"></div>
<div style="left:212.52px;top:337.12px;width:87.64px;height:12.32px;background:#4a2f16"></div>
<div style="left:299.88px;top:336.56px;width:2.52px;height:13.44px;background:#e8841c"></div>
<div style="left:332.64px;top:315px;width:11.48px;height:36.68px;background:#2b2b2b;box-shadow:inset 0 0 0 1.2px #3a3a3a"><div style="left:50%;top:1.4px;bottom:1.4px;width:1.2px;margin-left:-.6px;background:#3c3c3c"></div></div>
<div style="left:4.48px;top:359.1px;width:6.16px;height:46.06px;background:#6a6a6a"></div>
<div style="left:10.64px;top:359.1px;width:339.36px;height:46.06px;background:#4b4b4b;box-shadow:inset 0 1.4px 0 #5c5c5c"></div>
<div style="left:350px;top:359.1px;width:25.48px;height:46.06px;background:#3b3b3b;box-shadow:inset 0 1.4px 0 #484848"></div>
<div style="left:4.48px;top:404.88px;width:371px;height:1.4px;background:#2a2a2a"></div>
<div style="left:357px;top:365.54px;width:12.04px;height:11.2px;border-radius:2px;box-shadow:inset 0 0 0 1.3px #4e4e4e"><div style="left:50%;top:25%;width:1.2px;height:50%;background:#4e4e4e;margin-left:-.6px"></div><div style="top:50%;left:25%;height:1.2px;width:50%;background:#4e4e4e;margin-top:-.6px"></div></div>
<span style="left:17.92px;top:365.54px;font:9.4px 'Liberation Mono',monospace;color:#b0b0b0">5</span>
<svg style="left:32.9px;top:363.58px;" width="13.30" height="12.32" viewBox="0 0 13.30 12.32"><path d="M0.8 0.4Q2.6 5 12.8 6.2Q2.6 7.4 0.8 12Z" fill="#b8b8b8"/><path d="M2.4 2.6V9.8M4.2 3.6V8.8" stroke="#b8b8b8" stroke-width="1" opacity=".6"/></svg>
<span style="left:56.56px;top:364px;font:bold 11.6px 'Liberation Sans',sans-serif;color:#e4e4e4;letter-spacing:0.25px">track-05</span>
<div style="left:16.8px;top:382.9px;width:31.08px;height:14.56px;background:linear-gradient(#545454,#4a4a4a);border-radius:2px;box-shadow:0 0 0 1.2px #2c2c2c, inset 0 1px 0 #606060"></div>
<div style="left:19.6px;top:385.42px;width:7.56px;height:1.68px;background:#d6d6d6"></div>
<div style="left:19.6px;top:388.92px;width:7.56px;height:1.68px;background:#d6d6d6"></div>
<div style="left:19.6px;top:392.42px;width:7.56px;height:1.68px;background:#d6d6d6"></div>
<span style="left:31.92px;top:382.9px;font:12.6px 'Liberation Sans',sans-serif;color:#cacaca">Tr</span>
<div style="left:56px;top:382.9px;width:127.96px;height:14.56px;background:linear-gradient(#545454,#4a4a4a);border-radius:2px;box-shadow:0 0 0 1.2px #2c2c2c, inset 0 1px 0 #606060"></div>
<span style="left:65.24px;top:385.42px;font:bold 10.2px 'Liberation Sans',sans-serif;color:#b6b6b6;letter-spacing:0.32px">FW 410 Analog In 1</span>
<svg style="left:175.28px;top:388.78px;" width="5.60" height="3.64" viewBox="0 0 5.60 3.64"><path d="M0.3 0.5H5.3L2.8 3.4Z" fill="#e0e0e0"/></svg>
<div style="left:185.92px;top:382.9px;width:16.8px;height:14.56px;background:linear-gradient(#545454,#4a4a4a);border-radius:2px;box-shadow:0 0 0 1.2px #2c2c2c, inset 0 1px 0 #606060"></div>
<svg style="left:188.44px;top:384.3px;" width="11.76" height="11.76" viewBox="0 0 11.76 11.76"><path d="M1 4.2H4L8.4 0.6V11.2L4 7.6H1Z" fill="#d0d0d0"/></svg>
<div style="left:211.96px;top:363.3px;width:22.26px;height:13.58px;background:linear-gradient(#5a5a5a,#4c4c4c);box-shadow:0 0 0 1.2px #2c2c2c, inset 0 1px 0 #686868"></div>
<span style="left:211.96px;top:363.44px;width:22.96px;text-align:center;font:bold 12.4px 'Liberation Sans',sans-serif;color:#c2c2c2;letter-spacing:0.7px">FX</span>
<div style="left:235.48px;top:363.3px;width:18.2px;height:13.58px;background:linear-gradient(#5a5a5a,#4c4c4c);box-shadow:0 0 0 1.2px #2c2c2c, inset 0 1px 0 #686868"><div style="left:50%;top:50%;width:10.4px;height:10.4px;margin:-5.2px 0 0 -5.2px;border-radius:50%;background:radial-gradient(circle,#888 0,#888 18%,#1c1c1c 24%,#2c2c2c 70%,#3c3c3c 100%)"></div></div>
<div style="left:259.56px;top:363.3px;width:17.64px;height:13.58px;background:linear-gradient(#5a5a5a,#4c4c4c);box-shadow:0 0 0 1.2px #2c2c2c, inset 0 1px 0 #686868"><svg style="left:0;top:0" width="100%" height="100%" viewBox="0 0 17.64 13.58"><circle cx="8.8" cy="6.9" r="4.4" fill="#d0d0d0"/></svg></div>
<div style="left:283.36px;top:363.3px;width:18.34px;height:13.58px;background:linear-gradient(#5a5a5a,#4c4c4c);box-shadow:0 0 0 1.2px #2c2c2c, inset 0 1px 0 #686868"></div>
<span style="left:283.36px;top:363.44px;width:18.34px;text-align:center;font:bold 12.4px 'Liberation Sans',sans-serif;color:#c2c2c2">S</span>
<div style="left:307.44px;top:363.3px;width:18.2px;height:13.58px;background:linear-gradient(#5a5a5a,#4c4c4c);box-shadow:0 0 0 1.2px #2c2c2c, inset 0 1px 0 #686868"></div>
<span style="left:307.44px;top:363.44px;width:18.2px;text-align:center;font:bold 12.4px 'Liberation Sans',sans-serif;color:#c2c2c2">M</span>
<div style="left:210.28px;top:381.92px;width:116.2px;height:16.38px;background:#1d1d1d;border-radius:1.5px"></div>
<div style="left:212.52px;top:384.02px;width:87.64px;height:12.32px;background:#4a2f16"></div>
<div style="left:299.88px;top:383.46px;width:2.52px;height:13.44px;background:#e8841c"></div>
<div style="left:332.64px;top:361.9px;width:11.48px;height:36.68px;background:#2b2b2b;box-shadow:inset 0 0 0 1.2px #3a3a3a"><div style="left:50%;top:1.4px;bottom:1.4px;width:1.2px;margin-left:-.6px;background:#3c3c3c"></div></div>
<div style="left:4.48px;top:406px;width:6.16px;height:46.06px;background:#6a6a6a"></div>
<div style="left:10.64px;top:406px;width:339.36px;height:46.06px;background:#4b4b4b;box-shadow:inset 0 1.4px 0 #5c5c5c"></div>
<div style="left:350px;top:406px;width:25.48px;height:46.06px;background:#3b3b3b;box-shadow:inset 0 1.4px 0 #484848"></div>
<div style="left:4.48px;top:451.78px;width:371px;height:1.4px;background:#2a2a2a"></div>
<div style="left:357px;top:412.44px;width:12.04px;height:11.2px;border-radius:2px;box-shadow:inset 0 0 0 1.3px #4e4e4e"><div style="left:50%;top:25%;width:1.2px;height:50%;background:#4e4e4e;margin-left:-.6px"></div><div style="top:50%;left:25%;height:1.2px;width:50%;background:#4e4e4e;margin-top:-.6px"></div></div>
<span style="left:17.92px;top:412.44px;font:9.4px 'Liberation Mono',monospace;color:#b0b0b0">6</span>
<svg style="left:32.9px;top:410.48px;" width="13.30" height="12.32" viewBox="0 0 13.30 12.32"><path d="M0.8 0.4Q2.6 5 12.8 6.2Q2.6 7.4 0.8 12Z" fill="#b8b8b8"/><path d="M2.4 2.6V9.8M4.2 3.6V8.8" stroke="#b8b8b8" stroke-width="1" opacity=".6"/></svg>
<span style="left:56.56px;top:410.9px;font:bold 11.6px 'Liberation Sans',sans-serif;color:#e4e4e4;letter-spacing:0.25px">track-06</span>
<div style="left:16.8px;top:429.8px;width:31.08px;height:14.56px;background:linear-gradient(#545454,#4a4a4a);border-radius:2px;box-shadow:0 0 0 1.2px #2c2c2c, inset 0 1px 0 #606060"></div>
<div style="left:19.6px;top:432.32px;width:7.56px;height:1.68px;background:#d6d6d6"></div>
<div style="left:19.6px;top:435.82px;width:7.56px;height:1.68px;background:#d6d6d6"></div>
<div style="left:19.6px;top:439.32px;width:7.56px;height:1.68px;background:#d6d6d6"></div>
<span style="left:31.92px;top:429.8px;font:12.6px 'Liberation Sans',sans-serif;color:#cacaca">Tr</span>
<div style="left:56px;top:429.8px;width:127.96px;height:14.56px;background:linear-gradient(#545454,#4a4a4a);border-radius:2px;box-shadow:0 0 0 1.2px #2c2c2c, inset 0 1px 0 #606060"></div>
<span style="left:65.24px;top:432.32px;font:bold 10.2px 'Liberation Sans',sans-serif;color:#b6b6b6;letter-spacing:0.32px">FW 410 Analog In 1</span>
<svg style="left:175.28px;top:435.68px;" width="5.60" height="3.64" viewBox="0 0 5.60 3.64"><path d="M0.3 0.5H5.3L2.8 3.4Z" fill="#e0e0e0"/></svg>
<div style="left:185.92px;top:429.8px;width:16.8px;height:14.56px;background:linear-gradient(#545454,#4a4a4a);border-radius:2px;box-shadow:0 0 0 1.2px #2c2c2c, inset 0 1px 0 #606060"></div>
<svg style="left:188.44px;top:431.2px;" width="11.76" height="11.76" viewBox="0 0 11.76 11.76"><path d="M1 4.2H4L8.4 0.6V11.2L4 7.6H1Z" fill="#d0d0d0"/></svg>
<div style="left:211.96px;top:410.2px;width:22.26px;height:13.58px;background:linear-gradient(#5a5a5a,#4c4c4c);box-shadow:0 0 0 1.2px #2c2c2c, inset 0 1px 0 #686868"></div>
<span style="left:211.96px;top:410.34px;width:22.96px;text-align:center;font:bold 12.4px 'Liberation Sans',sans-serif;color:#c2c2c2;letter-spacing:0.7px">FX</span>
<div style="left:235.48px;top:410.2px;width:18.2px;height:13.58px;background:linear-gradient(#5a5a5a,#4c4c4c);box-shadow:0 0 0 1.2px #2c2c2c, inset 0 1px 0 #686868"><div style="left:50%;top:50%;width:10.4px;height:10.4px;margin:-5.2px 0 0 -5.2px;border-radius:50%;background:radial-gradient(circle,#888 0,#888 18%,#1c1c1c 24%,#2c2c2c 70%,#3c3c3c 100%)"></div></div>
<div style="left:259.56px;top:410.2px;width:17.64px;height:13.58px;background:linear-gradient(#5a5a5a,#4c4c4c);box-shadow:0 0 0 1.2px #2c2c2c, inset 0 1px 0 #686868"><svg style="left:0;top:0" width="100%" height="100%" viewBox="0 0 17.64 13.58"><circle cx="8.8" cy="6.9" r="4.4" fill="#d0d0d0"/></svg></div>
<div style="left:283.36px;top:410.2px;width:18.34px;height:13.58px;background:linear-gradient(#5a5a5a,#4c4c4c);box-shadow:0 0 0 1.2px #2c2c2c, inset 0 1px 0 #686868"></div>
<span style="left:283.36px;top:410.34px;width:18.34px;text-align:center;font:bold 12.4px 'Liberation Sans',sans-serif;color:#c2c2c2">S</span>
<div style="left:307.44px;top:410.2px;width:18.2px;height:13.58px;background:linear-gradient(#5a5a5a,#4c4c4c);box-shadow:0 0 0 1.2px #2c2c2c, inset 0 1px 0 #686868"></div>
<span style="left:307.44px;top:410.34px;width:18.2px;text-align:center;font:bold 12.4px 'Liberation Sans',sans-serif;color:#c2c2c2">M</span>
<div style="left:210.28px;top:428.82px;width:116.2px;height:16.38px;background:#1d1d1d;border-radius:1.5px"></div>
<div style="left:212.52px;top:430.92px;width:87.64px;height:12.32px;background:#4a2f16"></div>
<div style="left:299.88px;top:430.36px;width:2.52px;height:13.44px;background:#e8841c"></div>
<div style="left:332.64px;top:408.8px;width:11.48px;height:36.68px;background:#2b2b2b;box-shadow:inset 0 0 0 1.2px #3a3a3a"><div style="left:50%;top:1.4px;bottom:1.4px;width:1.2px;margin-left:-.6px;background:#3c3c3c"></div></div>
<div style="left:4.48px;top:452.9px;width:6.16px;height:46.06px;background:#6a6a6a"></div>
<div style="left:10.64px;top:452.9px;width:339.36px;height:46.06px;background:#4b4b4b;box-shadow:inset 0 1.4px 0 #5c5c5c"></div>
<div style="left:350px;top:452.9px;width:25.48px;height:46.06px;background:#3b3b3b;box-shadow:inset 0 1.4px 0 #484848"></div>
<div style="left:4.48px;top:498.68px;width:371px;height:1.4px;background:#2a2a2a"></div>
<div style="left:357px;top:459.34px;width:12.04px;height:11.2px;border-radius:2px;box-shadow:inset 0 0 0 1.3px #4e4e4e"><div style="left:50%;top:25%;width:1.2px;height:50%;background:#4e4e4e;margin-left:-.6px"></div><div style="top:50%;left:25%;height:1.2px;width:50%;background:#4e4e4e;margin-top:-.6px"></div></div>
<span style="left:17.92px;top:459.34px;font:9.4px 'Liberation Mono',monospace;color:#b0b0b0">7</span>
<svg style="left:32.9px;top:457.38px;" width="13.30" height="12.32" viewBox="0 0 13.30 12.32"><path d="M0.8 0.4Q2.6 5 12.8 6.2Q2.6 7.4 0.8 12Z" fill="#b8b8b8"/><path d="M2.4 2.6V9.8M4.2 3.6V8.8" stroke="#b8b8b8" stroke-width="1" opacity=".6"/></svg>
<span style="left:56.56px;top:457.8px;font:bold 11.6px 'Liberation Sans',sans-serif;color:#e4e4e4;letter-spacing:0.25px">track-07</span>
<div style="left:16.8px;top:476.7px;width:31.08px;height:14.56px;background:linear-gradient(#545454,#4a4a4a);border-radius:2px;box-shadow:0 0 0 1.2px #2c2c2c, inset 0 1px 0 #606060"></div>
<div style="left:19.6px;top:479.22px;width:7.56px;height:1.68px;background:#d6d6d6"></div>
<div style="left:19.6px;top:482.72px;width:7.56px;height:1.68px;background:#d6d6d6"></div>
<div style="left:19.6px;top:486.22px;width:7.56px;height:1.68px;background:#d6d6d6"></div>
<span style="left:31.92px;top:476.7px;font:12.6px 'Liberation Sans',sans-serif;color:#cacaca">Tr</span>
<div style="left:56px;top:476.7px;width:127.96px;height:14.56px;background:linear-gradient(#545454,#4a4a4a);border-radius:2px;box-shadow:0 0 0 1.2px #2c2c2c, inset 0 1px 0 #606060"></div>
<span style="left:65.24px;top:479.22px;font:bold 10.2px 'Liberation Sans',sans-serif;color:#b6b6b6;letter-spacing:0.32px">FW 410 Analog In 1</span>
<svg style="left:175.28px;top:482.58px;" width="5.60" height="3.64" viewBox="0 0 5.60 3.64"><path d="M0.3 0.5H5.3L2.8 3.4Z" fill="#e0e0e0"/></svg>
<div style="left:185.92px;top:476.7px;width:16.8px;height:14.56px;background:linear-gradient(#545454,#4a4a4a);border-radius:2px;box-shadow:0 0 0 1.2px #2c2c2c, inset 0 1px 0 #606060"></div>
<svg style="left:188.44px;top:478.1px;" width="11.76" height="11.76" viewBox="0 0 11.76 11.76"><path d="M1 4.2H4L8.4 0.6V11.2L4 7.6H1Z" fill="#d0d0d0"/></svg>
<div style="left:211.96px;top:457.1px;width:22.26px;height:13.58px;background:linear-gradient(#5a5a5a,#4c4c4c);box-shadow:0 0 0 1.2px #2c2c2c, inset 0 1px 0 #686868"></div>
<span style="left:211.96px;top:457.24px;width:22.96px;text-align:center;font:bold 12.4px 'Liberation Sans',sans-serif;color:#c2c2c2;letter-spacing:0.7px">FX</span>
<div style="left:235.48px;top:457.1px;width:18.2px;height:13.58px;background:linear-gradient(#5a5a5a,#4c4c4c);box-shadow:0 0 0 1.2px #2c2c2c, inset 0 1px 0 #686868"><div style="left:50%;top:50%;width:10.4px;height:10.4px;margin:-5.2px 0 0 -5.2px;border-radius:50%;background:radial-gradient(circle,#888 0,#888 18%,#1c1c1c 24%,#2c2c2c 70%,#3c3c3c 100%)"></div></div>
<div style="left:259.56px;top:457.1px;width:17.64px;height:13.58px;background:linear-gradient(#5a5a5a,#4c4c4c);box-shadow:0 0 0 1.2px #2c2c2c, inset 0 1px 0 #686868"><svg style="left:0;top:0" width="100%" height="100%" viewBox="0 0 17.64 13.58"><circle cx="8.8" cy="6.9" r="4.4" fill="#d0d0d0"/></svg></div>
<div style="left:283.36px;top:457.1px;width:18.34px;height:13.58px;background:linear-gradient(#5a5a5a,#4c4c4c);box-shadow:0 0 0 1.2px #2c2c2c, inset 0 1px 0 #686868"></div>
<span style="left:283.36px;top:457.24px;width:18.34px;text-align:center;font:bold 12.4px 'Liberation Sans',sans-serif;color:#c2c2c2">S</span>
<div style="left:307.44px;top:457.1px;width:18.2px;height:13.58px;background:linear-gradient(#5a5a5a,#4c4c4c);box-shadow:0 0 0 1.2px #2c2c2c, inset 0 1px 0 #686868"></div>
<span style="left:307.44px;top:457.24px;width:18.2px;text-align:center;font:bold 12.4px 'Liberation Sans',sans-serif;color:#c2c2c2">M</span>
<div style="left:210.28px;top:475.72px;width:116.2px;height:16.38px;background:#1d1d1d;border-radius:1.5px"></div>
<div style="left:212.52px;top:477.82px;width:87.64px;height:12.32px;background:#4a2f16"></div>
<div style="left:299.88px;top:477.26px;width:2.52px;height:13.44px;background:#e8841c"></div>
<div style="left:332.64px;top:455.7px;width:11.48px;height:36.68px;background:#2b2b2b;box-shadow:inset 0 0 0 1.2px #3a3a3a"><div style="left:50%;top:1.4px;bottom:1.4px;width:1.2px;margin-left:-.6px;background:#3c3c3c"></div></div>
<div style="left:4.2px;top:588.84px;width:371px;height:1.12px;background:#3a3a3a"></div>
<span style="left:6.44px;top:592.62px;font:11.4px 'Liberation Sans',sans-serif;color:#c2c2c2;letter-spacing:0.4px">untitled MIDI item [start] 3.1.00 [end] 7.1.00 [len] 4.0.00</span>
<!-- p4 -->
<div style="left:384.44px;top:105.84px;width:1294.72px;height:12.88px;background:#454545"></div>
<div style="left:384.3px;top:169.68px;width:1278.06px;height:328.72px;background:#afafaf"></div>
<div style="left:384.3px;top:498.4px;width:1278.06px;height:91.56px;background:#9c9c9c"></div>
<div style="left:527.77px;top:169.68px;width:143.47px;height:328.72px;background:#c1c1c1"></div>
<div style="left:527.77px;top:498.4px;width:143.47px;height:91.56px;background:#adadad"></div>
<svg style="left:384.3px;top:169.68px;" width="1278.06" height="420.28" viewBox="0 0 1278.06 420.28"><path d="M0.35 0V420.28" stroke="#6c6c6c" stroke-width="1.05"/><path d="M18.28 0V328.72" stroke="#989898" stroke-width="1.0"/><path d="M36.22 0V328.72" stroke="#989898" stroke-width="1.0"/><path d="M54.15 0V328.72" stroke="#989898" stroke-width="1.0"/><path d="M72.09 0V420.28" stroke="#6c6c6c" stroke-width="1.05"/><path d="M90.02 0V328.72" stroke="#989898" stroke-width="1.0"/><path d="M107.95 0V328.72" stroke="#989898" stroke-width="1.0"/><path d="M125.89 0V328.72" stroke="#989898" stroke-width="1.0"/><path d="M143.82 0V420.28" stroke="#6c6c6c" stroke-width="1.05"/><path d="M161.76 0V420.28" stroke="#a4a4a4" stroke-width="1.0"/><path d="M179.69 0V420.28" stroke="#a4a4a4" stroke-width="1.0"/><path d="M197.62 0V420.28" stroke="#a4a4a4" stroke-width="1.0"/><path d="M215.56 0V420.28" stroke="#6c6c6c" stroke-width="1.05"/><path d="M233.49 0V420.28" stroke="#a4a4a4" stroke-width="1.0"/><path d="M251.43 0V420.28" stroke="#a4a4a4" stroke-width="1.0"/><path d="M269.36 0V420.28" stroke="#a4a4a4" stroke-width="1.0"/><path d="M287.29 0V420.28" stroke="#6c6c6c" stroke-width="1.05"/><path d="M305.23 0V328.72" stroke="#989898" stroke-width="1.0"/><path d="M323.16 0V328.72" stroke="#989898" stroke-width="1.0"/><path d="M341.10 0V328.72" stroke="#989898" stroke-width="1.0"/><path d="M359.03 0V420.28" stroke="#6c6c6c" stroke-width="1.05"/><path d="M376.96 0V328.72" stroke="#989898" stroke-width="1.0"/><path d="M394.90 0V328.72" stroke="#989898" stroke-width="1.0"/><path d="M412.83 0V328.72" stroke="#989898" stroke-width="1.0"/><path d="M430.77 0V420.28" stroke="#6c6c6c" stroke-width="1.05"/><path d="M448.70 0V328.72" stroke="#989898" stroke-width="1.0"/><path d="M466.63 0V328.72" stroke="#989898" stroke-width="1.0"/><path d="M484.57 0V328.72" stroke="#989898" stroke-width="1.0"/><path d="M502.50 0V420.28" stroke="#6c6c6c" stroke-width="1.05"/><path d="M520.44 0V328.72" stroke="#989898" stroke-width="1.0"/><path d="M538.37 0V328.72" stroke="#989898" stroke-width="1.0"/><path d="M556.30 0V328.72" stroke="#989898" stroke-width="1.0"/><path d="M574.24 0V420.28" stroke="#6c6c6c" stroke-width="1.05"/><path d="M592.17 0V328.72" stroke="#989898" stroke-width="1.0"/><path d="M610.11 0V328.72" stroke="#989898" stroke-width="1.0"/><path d="M628.04 0V328.72" stroke="#989898" stroke-width="1.0"/><path d="M645.97 0V420.28" stroke="#6c6c6c" stroke-width="1.05"/><path d="M663.91 0V328.72" stroke="#989898" stroke-width="1.0"/><path d="M681.84 0V328.72" stroke="#989898" stroke-width="1.0"/><path d="M699.78 0V328.72" stroke="#989898" stroke-width="1.0"/><path d="M717.71 0V420.28" stroke="#6c6c6c" stroke-width="1.05"/><path d="M735.64 0V328.72" stroke="#989898" stroke-width="1.0"/><path d="M753.58 0V328.72" stroke="#989898" stroke-width="1.0"/><path d="M771.51 0V328.72" stroke="#989898" stroke-width="1.0"/><path d="M789.45 0V420.28" stroke="#6c6c6c" stroke-width="1.05"/><path d="M807.38 0V328.72" stroke="#989898" stroke-width="1.0"/><path d="M825.31 0V328.72" stroke="#989898" stroke-width="1.0"/><path d="M843.25 0V328.72" stroke="#989898" stroke-width="1.0"/><path d="M861.18 0V420.28" stroke="#6c6c6c" stroke-width="1.05"/><path d="M879.12 0V328.72" stroke="#989898" stroke-width="1.0"/><path d="M897.05 0V328.72" stroke="#989898" stroke-width="1.0"/><path d="M914.98 0V328.72" stroke="#989898" stroke-width="1.0"/><path d="M932.92 0V420.28" stroke="#6c6c6c" stroke-width="1.05"/><path d="M950.85 0V328.72" stroke="#989898" stroke-width="1.0"/><path d="M968.79 0V328.72" stroke="#989898" stroke-width="1.0"/><path d="M986.72 0V328.72" stroke="#989898" stroke-width="1.0"/><path d="M1004.65 0V420.28" stroke="#6c6c6c" stroke-width="1.05"/><path d="M1022.59 0V328.72" stroke="#989898" stroke-width="1.0"/><path d="M1040.52 0V328.72" stroke="#989898" stroke-width="1.0"/><path d="M1058.46 0V328.72" stroke="#989898" stroke-width="1.0"/><path d="M1076.39 0V420.28" stroke="#6c6c6c" stroke-width="1.05"/><path d="M1094.32 0V328.72" stroke="#989898" stroke-width="1.0"/><path d="M1112.26 0V328.72" stroke="#989898" stroke-width="1.0"/><path d="M1130.19 0V328.72" stroke="#989898" stroke-width="1.0"/><path d="M1148.13 0V420.28" stroke="#6c6c6c" stroke-width="1.05"/><path d="M1166.06 0V328.72" stroke="#989898" stroke-width="1.0"/><path d="M1183.99 0V328.72" stroke="#989898" stroke-width="1.0"/><path d="M1201.93 0V328.72" stroke="#989898" stroke-width="1.0"/><path d="M1219.86 0V420.28" stroke="#6c6c6c" stroke-width="1.05"/><path d="M1237.80 0V328.72" stroke="#989898" stroke-width="1.0"/><path d="M1255.73 0V328.72" stroke="#989898" stroke-width="1.0"/><path d="M1273.66 0V328.72" stroke="#989898" stroke-width="1.0"/><path d="M0 46.76H1278.06" stroke="#9e9e9e" stroke-width="1.0"/><path d="M0 93.66H1278.06" stroke="#9e9e9e" stroke-width="1.0"/><path d="M0 140.56H1278.06" stroke="#9e9e9e" stroke-width="1.0"/><path d="M0 187.46H1278.06" stroke="#9e9e9e" stroke-width="1.0"/><path d="M0 234.36H1278.06" stroke="#9e9e9e" stroke-width="1.0"/><path d="M0 281.26H1278.06" stroke="#9e9e9e" stroke-width="1.0"/><path d="M0 328.72H1278.06" stroke="#a6a6a6" stroke-width="1.2" opacity=".6"/></svg>
<svg style="left:383.6px;top:130.2px;" width="1296.40" height="39.76" viewBox="0 0 1296.40 39.76"><path d="M0.70 4.20V39.48" stroke="#b4b4b4" stroke-width="1.3"/><text x="4.90" y="15.26" font-family="Liberation Serif, serif" font-weight="bold" font-size="13.4" fill="#c9c9c9">1</text><path d="M18.63 31.36V39.48" stroke="#8c8c8c" stroke-width="1.3"/><path d="M36.57 31.36V39.48" stroke="#8c8c8c" stroke-width="1.3"/><path d="M54.50 31.36V39.48" stroke="#8c8c8c" stroke-width="1.3"/><path d="M72.44 4.20V39.48" stroke="#b4b4b4" stroke-width="1.3"/><text x="76.64" y="15.26" font-family="Liberation Serif, serif" font-weight="bold" font-size="13.4" fill="#c9c9c9">2</text><path d="M90.37 31.36V39.48" stroke="#8c8c8c" stroke-width="1.3"/><path d="M108.30 31.36V39.48" stroke="#8c8c8c" stroke-width="1.3"/><path d="M126.24 31.36V39.48" stroke="#8c8c8c" stroke-width="1.3"/><path d="M144.17 4.20V39.48" stroke="#b4b4b4" stroke-width="1.3"/><text x="148.37" y="15.26" font-family="Liberation Serif, serif" font-weight="bold" font-size="13.4" fill="#c9c9c9">3</text><path d="M162.11 31.36V39.48" stroke="#8c8c8c" stroke-width="1.3"/><path d="M180.04 31.36V39.48" stroke="#8c8c8c" stroke-width="1.3"/><path d="M197.97 31.36V39.48" stroke="#8c8c8c" stroke-width="1.3"/><path d="M215.91 4.20V39.48" stroke="#b4b4b4" stroke-width="1.3"/><text x="220.11" y="15.26" font-family="Liberation Serif, serif" font-weight="bold" font-size="13.4" fill="#c9c9c9">4</text><path d="M233.84 31.36V39.48" stroke="#8c8c8c" stroke-width="1.3"/><path d="M251.78 31.36V39.48" stroke="#8c8c8c" stroke-width="1.3"/><path d="M269.71 31.36V39.48" stroke="#8c8c8c" stroke-width="1.3"/><path d="M287.64 4.20V39.48" stroke="#b4b4b4" stroke-width="1.3"/><text x="291.84" y="15.26" font-family="Liberation Serif, serif" font-weight="bold" font-size="13.4" fill="#c9c9c9">5</text><path d="M305.58 31.36V39.48" stroke="#8c8c8c" stroke-width="1.3"/><path d="M323.51 31.36V39.48" stroke="#8c8c8c" stroke-width="1.3"/><path d="M341.45 31.36V39.48" stroke="#8c8c8c" stroke-width="1.3"/><path d="M359.38 4.20V39.48" stroke="#b4b4b4" stroke-width="1.3"/><text x="363.58" y="15.26" font-family="Liberation Serif, serif" font-weight="bold" font-size="13.4" fill="#c9c9c9">6</text><path d="M377.31 31.36V39.48" stroke="#8c8c8c" stroke-width="1.3"/><path d="M395.25 31.36V39.48" stroke="#8c8c8c" stroke-width="1.3"/><path d="M413.18 31.36V39.48" stroke="#8c8c8c" stroke-width="1.3"/><path d="M431.12 4.20V39.48" stroke="#b4b4b4" stroke-width="1.3"/><text x="435.32" y="15.26" font-family="Liberation Serif, serif" font-weight="bold" font-size="13.4" fill="#c9c9c9">7</text><path d="M449.05 31.36V39.48" stroke="#8c8c8c" stroke-width="1.3"/><path d="M466.98 31.36V39.48" stroke="#8c8c8c" stroke-width="1.3"/><path d="M484.92 31.36V39.48" stroke="#8c8c8c" stroke-width="1.3"/><path d="M502.85 4.20V39.48" stroke="#b4b4b4" stroke-width="1.3"/><text x="507.05" y="15.26" font-family="Liberation Serif, serif" font-weight="bold" font-size="13.4" fill="#c9c9c9">8</text><path d="M520.79 31.36V39.48" stroke="#8c8c8c" stroke-width="1.3"/><path d="M538.72 31.36V39.48" stroke="#8c8c8c" stroke-width="1.3"/><path d="M556.65 31.36V39.48" stroke="#8c8c8c" stroke-width="1.3"/><path d="M574.59 4.20V39.48" stroke="#b4b4b4" stroke-width="1.3"/><text x="578.79" y="15.26" font-family="Liberation Serif, serif" font-weight="bold" font-size="13.4" fill="#c9c9c9">9</text><path d="M592.52 31.36V39.48" stroke="#8c8c8c" stroke-width="1.3"/><path d="M610.46 31.36V39.48" stroke="#8c8c8c" stroke-width="1.3"/><path d="M628.39 31.36V39.48" stroke="#8c8c8c" stroke-width="1.3"/><path d="M646.32 4.20V39.48" stroke="#b4b4b4" stroke-width="1.3"/><text x="650.52" y="15.26" font-family="Liberation Serif, serif" font-weight="bold" font-size="13.4" fill="#c9c9c9">10</text><path d="M664.26 31.36V39.48" stroke="#8c8c8c" stroke-width="1.3"/><path d="M682.19 31.36V39.48" stroke="#8c8c8c" stroke-width="1.3"/><path d="M700.13 31.36V39.48" stroke="#8c8c8c" stroke-width="1.3"/><path d="M718.06 4.20V39.48" stroke="#b4b4b4" stroke-width="1.3"/><text x="722.26" y="15.26" font-family="Liberation Serif, serif" font-weight="bold" font-size="13.4" fill="#c9c9c9">11</text><path d="M735.99 31.36V39.48" stroke="#8c8c8c" stroke-width="1.3"/><path d="M753.93 31.36V39.48" stroke="#8c8c8c" stroke-width="1.3"/><path d="M771.86 31.36V39.48" stroke="#8c8c8c" stroke-width="1.3"/><path d="M789.80 4.20V39.48" stroke="#b4b4b4" stroke-width="1.3"/><text x="794.00" y="15.26" font-family="Liberation Serif, serif" font-weight="bold" font-size="13.4" fill="#c9c9c9">12</text><path d="M807.73 31.36V39.48" stroke="#8c8c8c" stroke-width="1.3"/><path d="M825.66 31.36V39.48" stroke="#8c8c8c" stroke-width="1.3"/><path d="M843.60 31.36V39.48" stroke="#8c8c8c" stroke-width="1.3"/><path d="M861.53 4.20V39.48" stroke="#b4b4b4" stroke-width="1.3"/><text x="865.73" y="15.26" font-family="Liberation Serif, serif" font-weight="bold" font-size="13.4" fill="#c9c9c9">13</text><path d="M879.47 31.36V39.48" stroke="#8c8c8c" stroke-width="1.3"/><path d="M897.40 31.36V39.48" stroke="#8c8c8c" stroke-width="1.3"/><path d="M915.33 31.36V39.48" stroke="#8c8c8c" stroke-width="1.3"/><path d="M933.27 4.20V39.48" stroke="#b4b4b4" stroke-width="1.3"/><text x="937.47" y="15.26" font-family="Liberation Serif, serif" font-weight="bold" font-size="13.4" fill="#c9c9c9">14</text><path d="M951.20 31.36V39.48" stroke="#8c8c8c" stroke-width="1.3"/><path d="M969.14 31.36V39.48" stroke="#8c8c8c" stroke-width="1.3"/><path d="M987.07 31.36V39.48" stroke="#8c8c8c" stroke-width="1.3"/><path d="M1005.00 4.20V39.48" stroke="#b4b4b4" stroke-width="1.3"/><text x="1009.20" y="15.26" font-family="Liberation Serif, serif" font-weight="bold" font-size="13.4" fill="#c9c9c9">15</text><path d="M1022.94 31.36V39.48" stroke="#8c8c8c" stroke-width="1.3"/><path d="M1040.87 31.36V39.48" stroke="#8c8c8c" stroke-width="1.3"/><path d="M1058.81 31.36V39.48" stroke="#8c8c8c" stroke-width="1.3"/><path d="M1076.74 4.20V39.48" stroke="#b4b4b4" stroke-width="1.3"/><text x="1080.94" y="15.26" font-family="Liberation Serif, serif" font-weight="bold" font-size="13.4" fill="#c9c9c9">16</text><path d="M1094.67 31.36V39.48" stroke="#8c8c8c" stroke-width="1.3"/><path d="M1112.61 31.36V39.48" stroke="#8c8c8c" stroke-width="1.3"/><path d="M1130.54 31.36V39.48" stroke="#8c8c8c" stroke-width="1.3"/><path d="M1148.48 4.20V39.48" stroke="#b4b4b4" stroke-width="1.3"/><text x="1152.68" y="15.26" font-family="Liberation Serif, serif" font-weight="bold" font-size="13.4" fill="#c9c9c9">17</text><path d="M1166.41 31.36V39.48" stroke="#8c8c8c" stroke-width="1.3"/><path d="M1184.34 31.36V39.48" stroke="#8c8c8c" stroke-width="1.3"/><path d="M1202.28 31.36V39.48" stroke="#8c8c8c" stroke-width="1.3"/><path d="M1220.21 4.20V39.48" stroke="#b4b4b4" stroke-width="1.3"/><text x="1224.41" y="15.26" font-family="Liberation Serif, serif" font-weight="bold" font-size="13.4" fill="#c9c9c9">18</text><path d="M1238.15 31.36V39.48" stroke="#8c8c8c" stroke-width="1.3"/><path d="M1256.08 31.36V39.48" stroke="#8c8c8c" stroke-width="1.3"/><path d="M1274.01 31.36V39.48" stroke="#8c8c8c" stroke-width="1.3"/><path d="M1291.95 4.20V39.48" stroke="#b4b4b4" stroke-width="1.3"/><text x="1296.15" y="15.26" font-family="Liberation Serif, serif" font-weight="bold" font-size="13.4" fill="#c9c9c9">19</text><path d="M144.17 36.82H287.64" stroke="#8a8a8a" stroke-width="2"/><path d="M144.17 30.24H154.77L144.17 39.20Z" fill="#6c6c6c" stroke="#a8a8a8" stroke-width="1"/><path d="M287.64 30.24H277.04L287.64 39.20Z" fill="#6c6c6c" stroke="#a8a8a8" stroke-width="1"/></svg>
<svg style="left:525.39px;top:217px;" width="289.46" height="43.26" viewBox="0 0 289.46 43.26"><defs><linearGradient id="ig1" x1="0" y1="0" x2="0" y2="1"><stop offset="0" stop-color="#a0a0a0"/><stop offset="0.12" stop-color="#999"/><stop offset="1" stop-color="#666"/></linearGradient><linearGradient id="ih1" x1="0" y1="0" x2="0" y2="1"><stop offset="0" stop-color="#808080"/><stop offset="0.12" stop-color="#7a7a7a"/><stop offset="1" stop-color="#4e4e4e"/></linearGradient></defs><path d="M0.7 42.56V7L7 0.7H288.76V42.56Z" fill="url(#ig1)"/><path d="M145.85 0.7H288.76V42.56H145.85Z" fill="url(#ih1)"/><path d="M2.2 40.86V7.6L7.6 2.2H287.26" fill="none" stroke="#b4b4b4" stroke-width="1" opacity=".7"/><path d="M2 41.16H287.26V2.4" fill="none" stroke="#c4c4c4" stroke-width="1.1" opacity=".85"/><path d="M0.7 42.56V7L7 0.7H288.76V42.56Z" fill="none" stroke="#262626" stroke-width="1.4"/><path d="M1.98 14.63h19.20" stroke="#2e2e2e" stroke-width="1.25"/><path d="M1.98 21.70h19.20" stroke="#2e2e2e" stroke-width="1.25"/><path d="M37.85 14.63h19.20" stroke="#2e2e2e" stroke-width="1.25"/><path d="M37.85 21.70h19.20" stroke="#2e2e2e" stroke-width="1.25"/><path d="M73.72 14.63h19.20" stroke="#2e2e2e" stroke-width="1.25"/><path d="M73.72 21.70h19.20" stroke="#2e2e2e" stroke-width="1.25"/><path d="M109.58 14.63h19.20" stroke="#2e2e2e" stroke-width="1.25"/><path d="M109.58 21.70h19.20" stroke="#2e2e2e" stroke-width="1.25"/><path d="M145.45 14.63h19.20" stroke="#2e2e2e" stroke-width="1.25"/><path d="M145.45 21.70h19.20" stroke="#2e2e2e" stroke-width="1.25"/><path d="M181.32 14.63h19.20" stroke="#2e2e2e" stroke-width="1.25"/><path d="M181.32 21.70h19.20" stroke="#2e2e2e" stroke-width="1.25"/><path d="M217.19 14.63h19.20" stroke="#2e2e2e" stroke-width="1.25"/><path d="M217.19 21.70h19.20" stroke="#2e2e2e" stroke-width="1.25"/><path d="M253.06 14.63h19.20" stroke="#2e2e2e" stroke-width="1.25"/><path d="M253.06 21.70h19.20" stroke="#2e2e2e" stroke-width="1.25"/></svg>
<svg style="left:525.39px;top:310.8px;" width="289.46" height="43.26" viewBox="0 0 289.46 43.26"><defs><linearGradient id="ig3" x1="0" y1="0" x2="0" y2="1"><stop offset="0" stop-color="#a0a0a0"/><stop offset="0.12" stop-color="#999"/><stop offset="1" stop-color="#666"/></linearGradient><linearGradient id="ih3" x1="0" y1="0" x2="0" y2="1"><stop offset="0" stop-color="#808080"/><stop offset="0.12" stop-color="#7a7a7a"/><stop offset="1" stop-color="#4e4e4e"/></linearGradient></defs><path d="M0.7 42.56V7L7 0.7H288.76V42.56Z" fill="url(#ig3)"/><path d="M145.85 0.7H288.76V42.56H145.85Z" fill="url(#ih3)"/><path d="M2.2 40.86V7.6L7.6 2.2H287.26" fill="none" stroke="#b4b4b4" stroke-width="1" opacity=".7"/><path d="M2 41.16H287.26V2.4" fill="none" stroke="#c4c4c4" stroke-width="1.1" opacity=".85"/><path d="M0.7 42.56V7L7 0.7H288.76V42.56Z" fill="none" stroke="#262626" stroke-width="1.4"/><path d="M1.98 14.63h19.20" stroke="#2e2e2e" stroke-width="1.25"/><path d="M1.98 21.70h19.20" stroke="#2e2e2e" stroke-width="1.25"/><path d="M37.85 14.63h19.20" stroke="#2e2e2e" stroke-width="1.25"/><path d="M37.85 21.70h19.20" stroke="#2e2e2e" stroke-width="1.25"/><path d="M73.72 14.63h19.20" stroke="#2e2e2e" stroke-width="1.25"/><path d="M73.72 21.70h19.20" stroke="#2e2e2e" stroke-width="1.25"/><path d="M109.58 14.63h19.20" stroke="#2e2e2e" stroke-width="1.25"/><path d="M109.58 21.70h19.20" stroke="#2e2e2e" stroke-width="1.25"/><path d="M145.45 14.63h19.20" stroke="#2e2e2e" stroke-width="1.25"/><path d="M145.45 21.70h19.20" stroke="#2e2e2e" stroke-width="1.25"/><path d="M181.32 14.63h19.20" stroke="#2e2e2e" stroke-width="1.25"/><path d="M181.32 21.70h19.20" stroke="#2e2e2e" stroke-width="1.25"/><path d="M217.19 14.63h19.20" stroke="#2e2e2e" stroke-width="1.25"/><path d="M217.19 21.70h19.20" stroke="#2e2e2e" stroke-width="1.25"/><path d="M253.06 14.63h19.20" stroke="#2e2e2e" stroke-width="1.25"/><path d="M253.06 21.70h19.20" stroke="#2e2e2e" stroke-width="1.25"/></svg>
<svg style="left:525.39px;top:404.6px;" width="289.46" height="43.26" viewBox="0 0 289.46 43.26"><defs><linearGradient id="ig5" x1="0" y1="0" x2="0" y2="1"><stop offset="0" stop-color="#a0a0a0"/><stop offset="0.12" stop-color="#999"/><stop offset="1" stop-color="#666"/></linearGradient><linearGradient id="ih5" x1="0" y1="0" x2="0" y2="1"><stop offset="0" stop-color="#808080"/><stop offset="0.12" stop-color="#7a7a7a"/><stop offset="1" stop-color="#4e4e4e"/></linearGradient></defs><path d="M0.7 42.56V7L7 0.7H288.76V42.56Z" fill="url(#ig5)"/><path d="M145.85 0.7H288.76V42.56H145.85Z" fill="url(#ih5)"/><path d="M2.2 40.86V7.6L7.6 2.2H287.26" fill="none" stroke="#b4b4b4" stroke-width="1" opacity=".7"/><path d="M2 41.16H287.26V2.4" fill="none" stroke="#c4c4c4" stroke-width="1.1" opacity=".85"/><path d="M0.7 42.56V7L7 0.7H288.76V42.56Z" fill="none" stroke="#262626" stroke-width="1.4"/><path d="M145.45 14.63h19.20" stroke="#2e2e2e" stroke-width="1.25"/><path d="M145.45 21.70h19.20" stroke="#2e2e2e" stroke-width="1.25"/><path d="M181.32 14.63h19.20" stroke="#2e2e2e" stroke-width="1.25"/><path d="M181.32 21.70h19.20" stroke="#2e2e2e" stroke-width="1.25"/><path d="M217.19 14.63h19.20" stroke="#2e2e2e" stroke-width="1.25"/><path d="M217.19 21.70h19.20" stroke="#2e2e2e" stroke-width="1.25"/><path d="M253.06 14.63h19.20" stroke="#2e2e2e" stroke-width="1.25"/><path d="M253.06 21.70h19.20" stroke="#2e2e2e" stroke-width="1.25"/></svg>
<div style="left:455.76px;top:134.4px;width:1.4px;height:35.28px;background:#c6c6c6"></div>
<div style="left:455.41px;top:169.68px;width:2.1px;height:420.28px;background:#ececec"></div>
<svg style="left:448.06px;top:134.12px;" width="16.80" height="8.68" viewBox="0 0 16.80 8.68"><defs><linearGradient id="cg" x1="0" y1="0" x2="0" y2="1"><stop offset="0" stop-color="#d4d4d4"/><stop offset="1" stop-color="#7c7c7c"/></linearGradient></defs><path d="M0.4 0.3H16.4L8.4 8.4Z" fill="url(#cg)"/></svg>
<div style="left:1663.2px;top:169.68px;width:16.8px;height:420.28px;background:#3a3a3a"></div>
<div style="left:1663.2px;top:188.16px;width:16.8px;height:344.4px;background:#4e4e4e"></div>
<div style="left:1663.2px;top:170.24px;width:16.8px;height:17.08px;background:#474747;box-shadow:inset 0 0 0 1px #3c3c3c"></div>
<svg style="left:1667.4px;top:175.28px;" width="8.96" height="7.28" viewBox="0 0 8.96 7.28"><path d="M0.4 6.8L4.5 0.6L8.6 6.8Z" fill="#c8c8c8"/></svg>
<div style="left:1663.2px;top:533.4px;width:16.8px;height:17.36px;background:#474747;box-shadow:inset 0 0 0 1px #3a3a3a"></div>
<svg style="left:1667.4px;top:539.28px;" width="8.96" height="7.28" viewBox="0 0 8.96 7.28"><path d="M0.4 0.6L4.5 6.8L8.6 0.6Z" fill="#c8c8c8"/></svg>
<div style="left:1663.2px;top:552.16px;width:16.8px;height:18.2px;background:#474747;box-shadow:inset 0 0 0 1px #3a3a3a"></div>
<div style="left:1667.12px;top:560.28px;width:9.24px;height:1.96px;background:#a8a8a8"></div>
<div style="left:1670.76px;top:556.64px;width:1.96px;height:9.24px;background:#a8a8a8"></div>
<div style="left:1663.2px;top:572.04px;width:16.8px;height:17.92px;background:#474747;box-shadow:inset 0 0 0 1px #3a3a3a"></div>
<div style="left:1667.12px;top:580.16px;width:9.24px;height:1.96px;background:#a8a8a8"></div>
<div style="left:384.3px;top:590.24px;width:1278.06px;height:16.52px;background:#363636"></div>
<div style="left:384.3px;top:590.24px;width:16.94px;height:16.52px;background:#424242"></div>
<svg style="left:389.76px;top:594.44px;" width="6.72" height="9.24" viewBox="0 0 6.72 9.24"><path d="M6.4 0.4L0.4 4.6L6.4 8.8Z" fill="#c0c0c0"/></svg>
<div style="left:401.8px;top:590.24px;width:1171.8px;height:16.52px;background:linear-gradient(#545454,#464646)"></div>
<svg style="left:1612.24px;top:593.6px;" width="8.12" height="9.80" viewBox="0 0 8.12 9.80"><path d="M0.6 0.4L7.8 4.9L0.6 9.4Z" fill="#a8a8a8"/></svg>
<div style="left:1624.56px;top:590.24px;width:0.7px;height:16.52px;background:#2a2a2a"></div>
<div style="left:1642.2px;top:590.24px;width:1.68px;height:16.52px;background:#2a2a2a"></div>
<div style="left:1627.36px;top:597.8px;width:10.92px;height:1.96px;background:#a8a8a8"></div>
<div style="left:1631.84px;top:593.32px;width:1.96px;height:10.92px;background:#a8a8a8"></div>
<div style="left:1648.36px;top:597.8px;width:10.64px;height:1.96px;background:#a8a8a8"></div>
<!-- p5 -->
<div style="left:0px;top:606.76px;width:1680px;height:8.68px;background:#121212"></div>
<div style="left:0px;top:654.08px;width:1680px;height:3.36px;background:#121212"></div>
<div style="left:0px;top:615.44px;width:1674.4px;height:38.64px;background:#191919;box-shadow:inset 0 1.2px 0 #272727, inset -1.2px 0 0 #272727, inset 0 -1.2px 0 #222"></div>
<div style="left:1.4px;top:657.44px;width:1431.36px;height:349.16px;background:#3d3d3d"></div>
<div style="left:130.48px;top:657.44px;width:1.12px;height:43.96px;background:#2c2c2c"></div>
<div style="left:9.8px;top:663.88px;width:50.96px;height:15.96px;background:#474747;box-shadow:0 0 0 1.2px #272727, inset 0 1px 0 #505050;"></div>
<span style="left:9.24px;top:665.28px;width:51.8px;text-align:center;font:11.6px 'Liberation Sans',sans-serif;color:#cacaca;letter-spacing:0.2px">7.1.48</span>
<div style="left:66.92px;top:663.88px;width:50.4px;height:15.96px;background:#474747;box-shadow:0 0 0 1.2px #272727, inset 0 1px 0 #505050;"></div>
<span style="left:66.36px;top:665.28px;width:51.24px;text-align:center;font:11.6px 'Liberation Sans',sans-serif;color:#cacaca;letter-spacing:0.2px">70</span>
<div style="left:131.32px;top:701.68px;width:1284.08px;height:232.4px;background:#a0a0a0"></div>
<svg style="left:131.32px;top:701.68px;" width="1284.08" height="232.40" viewBox="0 0 1284.08 232.40"><rect x="58.10" y="0.00" width="583.94" height="0.83" fill="#b3b3b3"/><rect x="642.04" y="0.00" width="583.94" height="0.83" fill="#a3a3a3"/><rect x="58.10" y="0.53" width="583.94" height="12.30" fill="#c1c1c1"/><rect x="642.04" y="0.53" width="583.94" height="12.30" fill="#b0b0b0"/><rect x="58.10" y="12.54" width="583.94" height="12.30" fill="#b3b3b3"/><rect x="642.04" y="12.54" width="583.94" height="12.30" fill="#a3a3a3"/><rect x="58.10" y="24.54" width="583.94" height="12.30" fill="#c1c1c1"/><rect x="642.04" y="24.54" width="583.94" height="12.30" fill="#b0b0b0"/><rect x="58.10" y="36.54" width="583.94" height="12.30" fill="#c1c1c1"/><rect x="642.04" y="36.54" width="583.94" height="12.30" fill="#b0b0b0"/><rect x="58.10" y="48.54" width="583.94" height="12.30" fill="#b3b3b3"/><rect x="642.04" y="48.54" width="583.94" height="12.30" fill="#a3a3a3"/><rect x="58.10" y="60.54" width="583.94" height="12.30" fill="#c1c1c1"/><rect x="642.04" y="60.54" width="583.94" height="12.30" fill="#b0b0b0"/><rect x="58.10" y="72.55" width="583.94" height="12.30" fill="#b3b3b3"/><rect x="642.04" y="72.55" width="583.94" height="12.30" fill="#a3a3a3"/><rect x="58.10" y="84.55" width="583.94" height="12.30" fill="#c1c1c1"/><rect x="642.04" y="84.55" width="583.94" height="12.30" fill="#b0b0b0"/><rect x="58.10" y="96.55" width="583.94" height="12.30" fill="#b3b3b3"/><rect x="642.04" y="96.55" width="583.94" height="12.30" fill="#a3a3a3"/><rect x="58.10" y="108.55" width="583.94" height="12.30" fill="#c1c1c1"/><rect x="642.04" y="108.55" width="583.94" height="12.30" fill="#b0b0b0"/><rect x="58.10" y="120.56" width="583.94" height="12.30" fill="#c1c1c1"/><rect x="642.04" y="120.56" width="583.94" height="12.30" fill="#b0b0b0"/><rect x="58.10" y="132.56" width="583.94" height="12.30" fill="#b3b3b3"/><rect x="642.04" y="132.56" width="583.94" height="12.30" fill="#a3a3a3"/><rect x="58.10" y="144.56" width="583.94" height="12.30" fill="#c1c1c1"/><rect x="642.04" y="144.56" width="583.94" height="12.30" fill="#b0b0b0"/><rect x="58.10" y="156.56" width="583.94" height="12.30" fill="#b3b3b3"/><rect x="642.04" y="156.56" width="583.94" height="12.30" fill="#a3a3a3"/><rect x="58.10" y="168.56" width="583.94" height="12.30" fill="#c1c1c1"/><rect x="642.04" y="168.56" width="583.94" height="12.30" fill="#b0b0b0"/><rect x="58.10" y="180.57" width="583.94" height="12.30" fill="#c1c1c1"/><rect x="642.04" y="180.57" width="583.94" height="12.30" fill="#b0b0b0"/><rect x="58.10" y="192.57" width="583.94" height="12.30" fill="#b3b3b3"/><rect x="642.04" y="192.57" width="583.94" height="12.30" fill="#a3a3a3"/><rect x="58.10" y="204.57" width="583.94" height="12.30" fill="#c1c1c1"/><rect x="642.04" y="204.57" width="583.94" height="12.30" fill="#b0b0b0"/><rect x="58.10" y="216.57" width="583.94" height="12.30" fill="#b3b3b3"/><rect x="642.04" y="216.57" width="583.94" height="12.30" fill="#a3a3a3"/><rect x="58.10" y="228.58" width="583.94" height="4.12" fill="#c1c1c1"/><rect x="642.04" y="228.58" width="583.94" height="4.12" fill="#b0b0b0"/><path d="M58.10 180.97H1225.98" stroke="#808080" stroke-width="1.2"/><path d="M58.10 120.96H1225.98" stroke="#a0a0a0" stroke-width="1.1"/><path d="M58.10 36.94H1225.98" stroke="#808080" stroke-width="1.2"/><path d="M58.40 0V232.40" stroke="#707070" stroke-width="1.3"/><path d="M94.90 0V232.40" stroke="#a6a6a6" stroke-width="0.95"/><path d="M131.39 0V232.40" stroke="#848484" stroke-width="1.05"/><path d="M167.89 0V232.40" stroke="#a6a6a6" stroke-width="0.95"/><path d="M204.39 0V232.40" stroke="#848484" stroke-width="1.05"/><path d="M240.88 0V232.40" stroke="#a6a6a6" stroke-width="0.95"/><path d="M277.38 0V232.40" stroke="#848484" stroke-width="1.05"/><path d="M313.87 0V232.40" stroke="#a6a6a6" stroke-width="0.95"/><path d="M350.37 0V232.40" stroke="#707070" stroke-width="1.3"/><path d="M386.87 0V232.40" stroke="#a6a6a6" stroke-width="0.95"/><path d="M423.36 0V232.40" stroke="#848484" stroke-width="1.05"/><path d="M459.86 0V232.40" stroke="#a6a6a6" stroke-width="0.95"/><path d="M496.36 0V232.40" stroke="#848484" stroke-width="1.05"/><path d="M532.85 0V232.40" stroke="#a6a6a6" stroke-width="0.95"/><path d="M569.35 0V232.40" stroke="#848484" stroke-width="1.05"/><path d="M605.84 0V232.40" stroke="#a6a6a6" stroke-width="0.95"/><path d="M642.34 0V232.40" stroke="#707070" stroke-width="1.3"/><path d="M678.84 0V232.40" stroke="#989898" stroke-width="0.95"/><path d="M715.33 0V232.40" stroke="#848484" stroke-width="1.05"/><path d="M751.83 0V232.40" stroke="#989898" stroke-width="0.95"/><path d="M788.32 0V232.40" stroke="#848484" stroke-width="1.05"/><path d="M824.82 0V232.40" stroke="#989898" stroke-width="0.95"/><path d="M861.32 0V232.40" stroke="#848484" stroke-width="1.05"/><path d="M897.81 0V232.40" stroke="#989898" stroke-width="0.95"/><path d="M934.31 0V232.40" stroke="#707070" stroke-width="1.3"/><path d="M970.81 0V232.40" stroke="#989898" stroke-width="0.95"/><path d="M1007.30 0V232.40" stroke="#848484" stroke-width="1.05"/><path d="M1043.80 0V232.40" stroke="#989898" stroke-width="0.95"/><path d="M1080.30 0V232.40" stroke="#848484" stroke-width="1.05"/><path d="M1116.79 0V232.40" stroke="#989898" stroke-width="0.95"/><path d="M1153.29 0V232.40" stroke="#848484" stroke-width="1.05"/><path d="M1189.78 0V232.40" stroke="#989898" stroke-width="0.95"/><path d="M1226.28 0V232.40" stroke="#707070" stroke-width="1.3"/><defs><linearGradient id="sh1" x1="0" x2="1"><stop offset="0" stop-color="#000" stop-opacity="0"/><stop offset="1" stop-color="#000" stop-opacity=".22"/></linearGradient><linearGradient id="sh2" x1="0" x2="1"><stop offset="0" stop-color="#000" stop-opacity=".28"/><stop offset="1" stop-color="#000" stop-opacity="0"/></linearGradient></defs><rect x="49.10" y="0" width="9" height="232.40" fill="url(#sh1)"/><rect x="1226.58" y="0" width="8" height="232.40" fill="url(#sh2)"/><rect x="642.64" y="25.24" width="72.59" height="11.40" fill="#e98a2b" stroke="#5a4a34" stroke-width="1.3"/><text x="644.64" y="33.94" font-family="Liberation Sans, sans-serif" font-size="9.4" fill="#2a2010">C3</text><rect x="642.64" y="109.25" width="72.59" height="11.40" fill="#e98a2b" stroke="#5a4a34" stroke-width="1.3"/><text x="644.64" y="117.96" font-family="Liberation Sans, sans-serif" font-size="9.4" fill="#2a2010">F2</text><rect x="788.62" y="25.24" width="72.59" height="11.40" fill="#e98a2b" stroke="#5a4a34" stroke-width="1.3"/><text x="790.62" y="33.94" font-family="Liberation Sans, sans-serif" font-size="9.4" fill="#2a2010">C3</text><rect x="788.62" y="109.25" width="72.59" height="11.40" fill="#e98a2b" stroke="#5a4a34" stroke-width="1.3"/><text x="790.62" y="117.96" font-family="Liberation Sans, sans-serif" font-size="9.4" fill="#2a2010">F2</text><rect x="934.61" y="25.24" width="72.59" height="11.40" fill="#e98a2b" stroke="#5a4a34" stroke-width="1.3"/><text x="936.61" y="33.94" font-family="Liberation Sans, sans-serif" font-size="9.4" fill="#2a2010">C3</text><rect x="934.61" y="109.25" width="72.59" height="11.40" fill="#e98a2b" stroke="#5a4a34" stroke-width="1.3"/><text x="936.61" y="117.96" font-family="Liberation Sans, sans-serif" font-size="9.4" fill="#2a2010">F2</text><rect x="1080.60" y="25.24" width="72.59" height="11.40" fill="#e98a2b" stroke="#5a4a34" stroke-width="1.3"/><text x="1082.60" y="33.94" font-family="Liberation Sans, sans-serif" font-size="9.4" fill="#2a2010">C3</text><rect x="1080.60" y="109.25" width="72.59" height="11.40" fill="#e98a2b" stroke="#5a4a34" stroke-width="1.3"/><text x="1082.60" y="117.96" font-family="Liberation Sans, sans-serif" font-size="9.4" fill="#2a2010">F2</text></svg>
<svg style="left:131.32px;top:657.44px;" width="1284.08" height="44.24" viewBox="0 0 1284.08 44.24"><path d="M58.40 22.96V43.96" stroke="#b8b8b8" stroke-width="1.5"/><text x="61.50" y="37.52" font-family="Liberation Sans, sans-serif" font-size="13.4" fill="#cfcfcf">3</text><text x="130.09" y="39.20" text-anchor="middle" font-family="Liberation Sans, sans-serif" font-weight="bold" font-size="10" fill="#d2d2d2" letter-spacing="0.55">3.2</text><text x="203.09" y="39.20" text-anchor="middle" font-family="Liberation Sans, sans-serif" font-weight="bold" font-size="10" fill="#d2d2d2" letter-spacing="0.55">3.3</text><text x="276.08" y="39.20" text-anchor="middle" font-family="Liberation Sans, sans-serif" font-weight="bold" font-size="10" fill="#d2d2d2" letter-spacing="0.55">3.4</text><path d="M350.37 22.96V43.96" stroke="#b8b8b8" stroke-width="1.5"/><text x="353.47" y="37.52" font-family="Liberation Sans, sans-serif" font-size="13.4" fill="#cfcfcf">4</text><text x="422.06" y="39.20" text-anchor="middle" font-family="Liberation Sans, sans-serif" font-weight="bold" font-size="10" fill="#d2d2d2" letter-spacing="0.55">4.2</text><text x="495.05" y="39.20" text-anchor="middle" font-family="Liberation Sans, sans-serif" font-weight="bold" font-size="10" fill="#d2d2d2" letter-spacing="0.55">4.3</text><text x="568.05" y="39.20" text-anchor="middle" font-family="Liberation Sans, sans-serif" font-weight="bold" font-size="10" fill="#d2d2d2" letter-spacing="0.55">4.4</text><path d="M642.34 22.96V43.96" stroke="#b8b8b8" stroke-width="1.5"/><text x="645.44" y="37.52" font-family="Liberation Sans, sans-serif" font-size="13.4" fill="#cfcfcf">5</text><text x="714.03" y="39.20" text-anchor="middle" font-family="Liberation Sans, sans-serif" font-weight="bold" font-size="10" fill="#d2d2d2" letter-spacing="0.55">5.2</text><text x="787.03" y="39.20" text-anchor="middle" font-family="Liberation Sans, sans-serif" font-weight="bold" font-size="10" fill="#d2d2d2" letter-spacing="0.55">5.3</text><text x="860.02" y="39.20" text-anchor="middle" font-family="Liberation Sans, sans-serif" font-weight="bold" font-size="10" fill="#d2d2d2" letter-spacing="0.55">5.4</text><path d="M934.31 22.96V43.96" stroke="#b8b8b8" stroke-width="1.5"/><text x="937.41" y="37.52" font-family="Liberation Sans, sans-serif" font-size="13.4" fill="#cfcfcf">6</text><text x="1006.00" y="39.20" text-anchor="middle" font-family="Liberation Sans, sans-serif" font-weight="bold" font-size="10" fill="#d2d2d2" letter-spacing="0.55">6.2</text><text x="1079.00" y="39.20" text-anchor="middle" font-family="Liberation Sans, sans-serif" font-weight="bold" font-size="10" fill="#d2d2d2" letter-spacing="0.55">6.3</text><text x="1151.99" y="39.20" text-anchor="middle" font-family="Liberation Sans, sans-serif" font-weight="bold" font-size="10" fill="#d2d2d2" letter-spacing="0.55">6.4</text><path d="M1226.28 22.96V43.96" stroke="#b8b8b8" stroke-width="1.5"/><text x="1229.38" y="37.52" font-family="Liberation Sans, sans-serif" font-size="13.4" fill="#cfcfcf">7</text><path d="M58.40 33.60H68.80L58.40 43.68Z" fill="#8a8a8a" opacity=".8"/><path d="M642.34 33.60H631.94L642.34 43.68Z" fill="#8a8a8a" opacity=".8"/></svg>
<svg style="left:0.84px;top:701.4px;" width="129.92" height="237.16" viewBox="0 0 129.92 237.16"><defs><linearGradient id="wk" x1="0" x2="1"><stop offset="0" stop-color="#ececec"/><stop offset="1" stop-color="#d9d9d9"/></linearGradient><linearGradient id="bk" x1="0" y1="0" x2="0" y2="1"><stop offset="0" stop-color="#7a7a7a"/><stop offset="0.2" stop-color="#505050"/><stop offset="0.75" stop-color="#3a3a3a"/><stop offset="1" stop-color="#222"/></linearGradient></defs><rect x="0" y="0" width="129.92" height="237.16" fill="#1e1e1e"/><rect x="2" y="0" width="125.72" height="236.56" fill="url(#wk)"/><path d="M2 17.51H127.72" stroke="#2e2e2e" stroke-width="1.5"/><path d="M2 18.91H127.72" stroke="#f6f6f6" stroke-width="1" opacity=".8"/><path d="M2 37.52H127.72" stroke="#2e2e2e" stroke-width="1.5"/><path d="M2 38.92H127.72" stroke="#f6f6f6" stroke-width="1" opacity=".8"/><path d="M2 58.52H127.72" stroke="#2e2e2e" stroke-width="1.5"/><path d="M2 59.92H127.72" stroke="#f6f6f6" stroke-width="1" opacity=".8"/><path d="M2 79.53H127.72" stroke="#2e2e2e" stroke-width="1.5"/><path d="M2 80.93H127.72" stroke="#f6f6f6" stroke-width="1" opacity=".8"/><path d="M2 100.53H127.72" stroke="#2e2e2e" stroke-width="1.5"/><path d="M2 101.93H127.72" stroke="#f6f6f6" stroke-width="1" opacity=".8"/><path d="M2 121.53H127.72" stroke="#2e2e2e" stroke-width="1.5"/><path d="M2 122.93H127.72" stroke="#f6f6f6" stroke-width="1" opacity=".8"/><path d="M2 141.54H127.72" stroke="#2e2e2e" stroke-width="1.5"/><path d="M2 142.94H127.72" stroke="#f6f6f6" stroke-width="1" opacity=".8"/><path d="M2 161.55H127.72" stroke="#2e2e2e" stroke-width="1.5"/><path d="M2 162.95H127.72" stroke="#f6f6f6" stroke-width="1" opacity=".8"/><path d="M2 181.55H127.72" stroke="#2e2e2e" stroke-width="1.5"/><path d="M2 182.95H127.72" stroke="#f6f6f6" stroke-width="1" opacity=".8"/><path d="M2 202.55H127.72" stroke="#2e2e2e" stroke-width="1.5"/><path d="M2 203.95H127.72" stroke="#f6f6f6" stroke-width="1" opacity=".8"/><path d="M2 223.55H127.72" stroke="#2e2e2e" stroke-width="1.5"/><path d="M2 224.95H127.72" stroke="#f6f6f6" stroke-width="1" opacity=".8"/><rect x="2" y="216.57" width="72.20" height="14.94" fill="url(#bk)" stroke="#1a1a1a" stroke-width="1"/><rect x="68.70" y="217.07" width="5" height="13.94" fill="#262626" opacity=".8"/><rect x="2" y="192.57" width="72.20" height="14.94" fill="url(#bk)" stroke="#1a1a1a" stroke-width="1"/><rect x="68.70" y="193.07" width="5" height="13.94" fill="#262626" opacity=".8"/><rect x="2" y="156.56" width="72.20" height="14.94" fill="url(#bk)" stroke="#1a1a1a" stroke-width="1"/><rect x="68.70" y="157.06" width="5" height="13.94" fill="#262626" opacity=".8"/><rect x="2" y="132.56" width="72.20" height="14.94" fill="url(#bk)" stroke="#1a1a1a" stroke-width="1"/><rect x="68.70" y="133.06" width="5" height="13.94" fill="#262626" opacity=".8"/><rect x="2" y="96.55" width="72.20" height="14.94" fill="url(#bk)" stroke="#1a1a1a" stroke-width="1"/><rect x="68.70" y="97.05" width="5" height="13.94" fill="#262626" opacity=".8"/><rect x="2" y="72.55" width="72.20" height="14.94" fill="url(#bk)" stroke="#1a1a1a" stroke-width="1"/><rect x="68.70" y="73.05" width="5" height="13.94" fill="#262626" opacity=".8"/><rect x="2" y="48.54" width="72.20" height="14.94" fill="url(#bk)" stroke="#1a1a1a" stroke-width="1"/><rect x="68.70" y="49.04" width="5" height="13.94" fill="#262626" opacity=".8"/><rect x="2" y="12.54" width="72.20" height="14.94" fill="url(#bk)" stroke="#1a1a1a" stroke-width="1"/><rect x="68.70" y="13.04" width="5" height="13.94" fill="#262626" opacity=".8"/><rect x="2" y="-2.80" width="72.20" height="6.27" fill="url(#bk)" stroke="#1a1a1a" stroke-width="1"/><rect x="68.70" y="-2.30" width="5" height="5.27" fill="#262626" opacity=".8"/><text x="126.52" y="30.42" text-anchor="end" font-family="Liberation Sans, sans-serif" font-size="10.6" fill="#2a2a2a">C3</text><text x="126.52" y="174.45" text-anchor="end" font-family="Liberation Sans, sans-serif" font-size="10.6" fill="#2a2a2a">C2</text></svg>
<div style="left:130.76px;top:934.08px;width:1284.64px;height:8.96px;background:#222"></div>
<svg style="left:132.16px;top:935.48px;" width="24.64" height="6.16" viewBox="0 0 24.64 6.16"><rect x="1.20" y="0.8" width="1.5" height="1.8" fill="#e0e0e0"/><rect x="1.20" y="3.6" width="1.5" height="1.8" fill="#e0e0e0"/><rect x="4.04" y="0.8" width="1.5" height="1.8" fill="#e0e0e0"/><rect x="4.04" y="3.6" width="1.5" height="1.8" fill="#e0e0e0"/><rect x="6.88" y="0.8" width="1.5" height="1.8" fill="#e0e0e0"/><rect x="6.88" y="3.6" width="1.5" height="1.8" fill="#e0e0e0"/><rect x="9.72" y="0.8" width="1.5" height="1.8" fill="#e0e0e0"/><rect x="9.72" y="3.6" width="1.5" height="1.8" fill="#e0e0e0"/><rect x="12.56" y="0.8" width="1.5" height="1.8" fill="#e0e0e0"/><rect x="12.56" y="3.6" width="1.5" height="1.8" fill="#e0e0e0"/><rect x="15.40" y="0.8" width="1.5" height="1.8" fill="#e0e0e0"/><rect x="15.40" y="3.6" width="1.5" height="1.8" fill="#e0e0e0"/><rect x="18.24" y="0.8" width="1.5" height="1.8" fill="#e0e0e0"/><rect x="18.24" y="3.6" width="1.5" height="1.8" fill="#e0e0e0"/><rect x="21.08" y="0.8" width="1.5" height="1.8" fill="#e0e0e0"/><rect x="21.08" y="3.6" width="1.5" height="1.8" fill="#e0e0e0"/><rect x="23.92" y="0.8" width="1.5" height="1.8" fill="#e0e0e0"/><rect x="23.92" y="3.6" width="1.5" height="1.8" fill="#e0e0e0"/></svg>
<svg style="left:1388.8px;top:935.48px;" width="24.64" height="6.16" viewBox="0 0 24.64 6.16"><rect x="1.20" y="0.8" width="1.5" height="1.8" fill="#e0e0e0"/><rect x="1.20" y="3.6" width="1.5" height="1.8" fill="#e0e0e0"/><rect x="4.04" y="0.8" width="1.5" height="1.8" fill="#e0e0e0"/><rect x="4.04" y="3.6" width="1.5" height="1.8" fill="#e0e0e0"/><rect x="6.88" y="0.8" width="1.5" height="1.8" fill="#e0e0e0"/><rect x="6.88" y="3.6" width="1.5" height="1.8" fill="#e0e0e0"/><rect x="9.72" y="0.8" width="1.5" height="1.8" fill="#e0e0e0"/><rect x="9.72" y="3.6" width="1.5" height="1.8" fill="#e0e0e0"/><rect x="12.56" y="0.8" width="1.5" height="1.8" fill="#e0e0e0"/><rect x="12.56" y="3.6" width="1.5" height="1.8" fill="#e0e0e0"/><rect x="15.40" y="0.8" width="1.5" height="1.8" fill="#e0e0e0"/><rect x="15.40" y="3.6" width="1.5" height="1.8" fill="#e0e0e0"/><rect x="18.24" y="0.8" width="1.5" height="1.8" fill="#e0e0e0"/><rect x="18.24" y="3.6" width="1.5" height="1.8" fill="#e0e0e0"/><rect x="21.08" y="0.8" width="1.5" height="1.8" fill="#e0e0e0"/><rect x="21.08" y="3.6" width="1.5" height="1.8" fill="#e0e0e0"/><rect x="23.92" y="0.8" width="1.5" height="1.8" fill="#e0e0e0"/><rect x="23.92" y="3.6" width="1.5" height="1.8" fill="#e0e0e0"/></svg>
<div style="left:131.32px;top:943.04px;width:642.04px;height:47.04px;background:#4a4a4a"></div>
<div style="left:773.36px;top:943.04px;width:642.04px;height:47.04px;background:#414141"></div>
<svg style="left:131.32px;top:943.04px;" width="1284.08" height="47.04" viewBox="0 0 1284.08 47.04"><path d="M21.90 0V47.04" stroke="#e0e0e0" stroke-width="1.1"/><path d="M58.40 0V47.04" stroke="#8c8c8c" stroke-width="1.1"/><path d="M94.90 0V47.04" stroke="#8c8c8c" stroke-width="1.1"/><path d="M131.39 0V47.04" stroke="#8c8c8c" stroke-width="1.1"/><path d="M167.89 0V47.04" stroke="#8c8c8c" stroke-width="1.1"/><path d="M204.39 0V47.04" stroke="#8c8c8c" stroke-width="1.1"/><path d="M240.88 0V47.04" stroke="#8c8c8c" stroke-width="1.1"/><path d="M277.38 0V47.04" stroke="#8c8c8c" stroke-width="1.1"/><path d="M313.87 0V47.04" stroke="#8c8c8c" stroke-width="1.1"/><path d="M350.37 0V47.04" stroke="#8c8c8c" stroke-width="1.1"/><path d="M386.87 0V47.04" stroke="#8c8c8c" stroke-width="1.1"/><path d="M423.36 0V47.04" stroke="#8c8c8c" stroke-width="1.1"/><path d="M459.86 0V47.04" stroke="#8c8c8c" stroke-width="1.1"/><path d="M496.36 0V47.04" stroke="#8c8c8c" stroke-width="1.1"/><path d="M532.85 0V47.04" stroke="#8c8c8c" stroke-width="1.1"/><path d="M569.35 0V47.04" stroke="#8c8c8c" stroke-width="1.1"/><path d="M605.84 0V47.04" stroke="#8c8c8c" stroke-width="1.1"/><path d="M642.34 0V47.04" stroke="#7c7c7c" stroke-width="1.1"/><path d="M678.84 0V47.04" stroke="#7c7c7c" stroke-width="1.1"/><path d="M715.33 0V47.04" stroke="#7c7c7c" stroke-width="1.1"/><path d="M751.83 0V47.04" stroke="#7c7c7c" stroke-width="1.1"/><path d="M788.32 0V47.04" stroke="#7c7c7c" stroke-width="1.1"/><path d="M824.82 0V47.04" stroke="#7c7c7c" stroke-width="1.1"/><path d="M861.32 0V47.04" stroke="#7c7c7c" stroke-width="1.1"/><path d="M897.81 0V47.04" stroke="#7c7c7c" stroke-width="1.1"/><path d="M934.31 0V47.04" stroke="#7c7c7c" stroke-width="1.1"/><path d="M970.81 0V47.04" stroke="#7c7c7c" stroke-width="1.1"/><path d="M1007.30 0V47.04" stroke="#7c7c7c" stroke-width="1.1"/><path d="M1043.80 0V47.04" stroke="#7c7c7c" stroke-width="1.1"/><path d="M1080.30 0V47.04" stroke="#7c7c7c" stroke-width="1.1"/><path d="M1116.79 0V47.04" stroke="#7c7c7c" stroke-width="1.1"/><path d="M1153.29 0V47.04" stroke="#7c7c7c" stroke-width="1.1"/><path d="M1189.78 0V47.04" stroke="#7c7c7c" stroke-width="1.1"/><path d="M1226.28 0V47.04" stroke="#7c7c7c" stroke-width="1.1"/><path d="M1262.78 0V47.04" stroke="#7c7c7c" stroke-width="1.1"/><path d="M0 23.12H1284.08" stroke="#6e6e6e" stroke-width="1.1"/><rect x="642.44" y="11.76" width="6.6" height="34.16" fill="#ee8c2a" stroke="#7a4a14" stroke-width=".8"/><rect x="788.42" y="11.76" width="6.6" height="34.16" fill="#ee8c2a" stroke="#7a4a14" stroke-width=".8"/><rect x="934.41" y="11.76" width="6.6" height="34.16" fill="#ee8c2a" stroke="#7a4a14" stroke-width=".8"/><rect x="1080.40" y="11.76" width="6.6" height="34.16" fill="#ee8c2a" stroke="#7a4a14" stroke-width=".8"/></svg>
<div style="left:131.32px;top:990.64px;width:1284.08px;height:15.96px;background:#3a3a3a"></div>
<div style="left:149.8px;top:990.64px;width:1208.2px;height:15.96px;background:linear-gradient(#525252,#474747)"></div>
<svg style="left:136.36px;top:993.72px;" width="7.28" height="9.24" viewBox="0 0 7.28 9.24"><path d="M7 0.4L0.4 4.6L7 8.8Z" fill="#b8b8b8"/></svg>
<div style="left:1358.84px;top:990.92px;width:18.2px;height:15.68px;background:#444;box-shadow:inset 0 0 0 1px #363636"></div>
<svg style="left:1365.56px;top:993.72px;" width="7.28" height="9.24" viewBox="0 0 7.28 9.24"><path d="M0.4 0.4L7 4.6L0.4 8.8Z" fill="#b8b8b8"/></svg>
<div style="left:1378.16px;top:990.92px;width:17.08px;height:15.68px;background:#444;box-shadow:inset 0 0 0 1px #363636"></div>
<div style="left:1381.24px;top:997.92px;width:9.8px;height:1.96px;background:#b4b4b4"></div>
<div style="left:1385.16px;top:994px;width:1.96px;height:9.8px;background:#b4b4b4"></div>
<div style="left:1397.2px;top:990.92px;width:17.64px;height:15.68px;background:#444;box-shadow:inset 0 0 0 1px #363636"></div>
<div style="left:1401.4px;top:997.92px;width:9.8px;height:1.96px;background:#b4b4b4"></div>
<div style="left:1415.68px;top:657.44px;width:17.08px;height:44.24px;background:#343434"></div>
<div style="left:1415.96px;top:701.4px;width:16.52px;height:232.4px;background:#383838"></div>
<div style="left:1415.96px;top:829.92px;width:16.52px;height:29.68px;background:#565656"></div>
<svg style="left:1419.6px;top:705.04px;" width="9.24" height="7.56" viewBox="0 0 9.24 7.56"><path d="M0.4 7L4.6 0.6L8.8 7Z" fill="#b4b4b4"/></svg>
<svg style="left:1419.6px;top:937.16px;" width="9.24" height="7.56" viewBox="0 0 9.24 7.56"><path d="M0.4 0.6L4.6 7L8.8 0.6Z" fill="#b4b4b4"/></svg>
<div style="left:1416.24px;top:952.84px;width:15.96px;height:16.8px;background:#464646;box-shadow:inset 0 0 0 1px #363636"></div>
<div style="left:1419.32px;top:960.4px;width:9.8px;height:1.96px;background:#b4b4b4"></div>
<div style="left:1423.24px;top:956.48px;width:1.96px;height:9.8px;background:#b4b4b4"></div>
<div style="left:1416.24px;top:973.56px;width:15.96px;height:16.8px;background:#464646;box-shadow:inset 0 0 0 1px #363636"></div>
<div style="left:1419.32px;top:981.12px;width:9.8px;height:1.96px;background:#b4b4b4"></div>
<div style="left:4.76px;top:969.64px;width:112.28px;height:19.32px;background:linear-gradient(#fff,#e9e9e9);border-radius:3px;box-shadow:0 0 0 1px #707070"></div>
<span style="left:8.96px;top:973.42px;font:11.6px 'Liberation Sans',sans-serif;color:#111;letter-spacing:-0.2px">•Velocity</span>
<svg style="left:105.56px;top:976.92px;" width="7.28" height="4.48" viewBox="0 0 7.28 4.48"><path d="M0.2 0.4H7L3.6 4.2Z" fill="#111"/></svg>
<div style="left:119.84px;top:978.88px;width:8.4px;height:9.52px;box-shadow:inset 0 0 0 1.1px #8a8a8a"><div style="left:50%;top:22%;width:1.1px;height:56%;background:#8a8a8a;margin-left:-.55px"></div><div style="top:50%;left:22%;height:1.1px;width:56%;background:#8a8a8a;margin-top:-.55px"></div></div>
<div style="left:1432.76px;top:657.44px;width:8.68px;height:349.16px;background:#272727"></div>
<div style="left:1437.38px;top:657.44px;width:1.26px;height:349.16px;background:#181818"></div>
<div style="left:1441.44px;top:657.44px;width:236.6px;height:349.16px;background:#272727"></div>
<div style="left:1443.12px;top:658.7px;width:234.36px;height:17.08px;background:#343434;box-shadow:inset 0 0 0 1.2px #555"></div>
<svg style="left:1446.48px;top:661.78px;" width="10.64" height="10.64" viewBox="0 0 10.64 10.64"><circle cx="5.3" cy="5.3" r="5.1" fill="#1c1c1c"/><path d="M3.6 2.4L8.4 5.3L3.6 8.2Z" fill="#ececec"/></svg>
<span style="left:1464.4px;top:660.24px;font:11.5px 'Liberation Sans',sans-serif;color:#bcbcbc;letter-spacing:-0.1px">track-02</span>
<div style="left:1560.44px;top:661.5px;width:11.2px;height:11.2px;box-shadow:inset 0 0 0 1.1px #5a5a5a"></div>
<div style="left:1573.88px;top:659.82px;width:0.98px;height:14.84px;background:#4c4c4c"></div>
<div style="left:1590.82px;top:659.82px;width:0.98px;height:14.84px;background:#4c4c4c"></div>
<div style="left:1607.76px;top:659.82px;width:0.98px;height:14.84px;background:#4c4c4c"></div>
<div style="left:1625.4px;top:659.82px;width:0.98px;height:14.84px;background:#4c4c4c"></div>
<div style="left:1642.34px;top:659.82px;width:0.98px;height:14.84px;background:#4c4c4c"></div>
<div style="left:1659px;top:659.82px;width:0.98px;height:14.84px;background:#4c4c4c"></div>
<svg style="left:1576.68px;top:660.66px;" width="13.44" height="13.16" viewBox="0 0 13.44 13.16"><path d="M1.2 2.8H6.8V8.4" fill="none" stroke="#808080" stroke-width="2"/><path d="M3 6.4L6.8 10.6L10.6 6.4Z" fill="#808080"/><path d="M2 12.2H12" stroke="#808080" stroke-width="1.7"/></svg>
<svg style="left:1594.6px;top:661.5px;" width="10.08" height="11.48" viewBox="0 0 10.08 11.48"><rect x="1" y="5.6" width="9.2" height="6.6" fill="#f0f0f0"/><path d="M3 6V4.2A2.6 2.6 0 0 1 8.2 4.2V6" fill="none" stroke="#f0f0f0" stroke-width="1.7"/></svg>
<svg style="left:1610.56px;top:662.34px;" width="12.88" height="9.80" viewBox="0 0 12.88 9.80"><ellipse cx="6.4" cy="4.9" rx="5.6" ry="3.9" fill="none" stroke="#5e5e5e" stroke-width="1.5"/><ellipse cx="6.4" cy="4.7" rx="2.6" ry="2.3" fill="#5e5e5e"/></svg>
<div style="left:1630.16px;top:663.18px;width:8.12px;height:8.12px;background:#5e5e5e;border-radius:50%"></div>
<span style="left:1645.84px;top:659.82px;font:bold 11.4px 'Liberation Sans',sans-serif;color:#6a6a6a">M</span>
<span style="left:1664.32px;top:659.82px;font:bold 11.4px 'Liberation Sans',sans-serif;color:#6a6a6a">S</span>
<div style="left:1443.12px;top:675.5px;width:234.36px;height:17.08px;background:#343434;box-shadow:inset 0 0 0 1.2px #555"></div>
<svg style="left:1446.48px;top:678.58px;" width="10.64" height="10.64" viewBox="0 0 10.64 10.64"><circle cx="5.3" cy="5.3" r="5.1" fill="#1c1c1c"/><path d="M3.6 2.4L8.4 5.3L3.6 8.2Z" fill="#ececec"/></svg>
<span style="left:1464.4px;top:677.04px;font:11.5px 'Liberation Sans',sans-serif;color:#bcbcbc;letter-spacing:-0.1px">track-04</span>
<div style="left:1560.44px;top:678.3px;width:11.2px;height:11.2px;box-shadow:inset 0 0 0 1.1px #5a5a5a"></div>
<div style="left:1573.88px;top:676.62px;width:0.98px;height:14.84px;background:#4c4c4c"></div>
<div style="left:1590.82px;top:676.62px;width:0.98px;height:14.84px;background:#4c4c4c"></div>
<div style="left:1607.76px;top:676.62px;width:0.98px;height:14.84px;background:#4c4c4c"></div>
<div style="left:1625.4px;top:676.62px;width:0.98px;height:14.84px;background:#4c4c4c"></div>
<div style="left:1642.34px;top:676.62px;width:0.98px;height:14.84px;background:#4c4c4c"></div>
<div style="left:1659px;top:676.62px;width:0.98px;height:14.84px;background:#4c4c4c"></div>
<svg style="left:1576.68px;top:677.46px;" width="13.44" height="13.16" viewBox="0 0 13.44 13.16"><path d="M1.2 2.8H6.8V8.4" fill="none" stroke="#808080" stroke-width="2"/><path d="M3 6.4L6.8 10.6L10.6 6.4Z" fill="#808080"/><path d="M2 12.2H12" stroke="#808080" stroke-width="1.7"/></svg>
<svg style="left:1594.6px;top:678.3px;" width="10.08" height="11.48" viewBox="0 0 10.08 11.48"><rect x="1" y="5.6" width="9.2" height="6.6" fill="#f0f0f0"/><path d="M3 6V4.2A2.6 2.6 0 0 1 8.2 4.2V6" fill="none" stroke="#f0f0f0" stroke-width="1.7"/></svg>
<svg style="left:1610.56px;top:679.14px;" width="12.88" height="9.80" viewBox="0 0 12.88 9.80"><ellipse cx="6.4" cy="4.9" rx="5.6" ry="3.9" fill="none" stroke="#5e5e5e" stroke-width="1.5"/><ellipse cx="6.4" cy="4.7" rx="2.6" ry="2.3" fill="#5e5e5e"/></svg>
<div style="left:1630.16px;top:679.98px;width:8.12px;height:8.12px;background:#5e5e5e;border-radius:50%"></div>
<span style="left:1645.84px;top:676.62px;font:bold 11.4px 'Liberation Sans',sans-serif;color:#6a6a6a">M</span>
<span style="left:1664.32px;top:676.62px;font:bold 11.4px 'Liberation Sans',sans-serif;color:#6a6a6a">S</span>
<div style="left:1443.12px;top:692.3px;width:234.36px;height:17.08px;background:#343434;box-shadow:inset 0 0 0 1.2px #555"></div>
<svg style="left:1446.48px;top:695.38px;" width="10.64" height="10.64" viewBox="0 0 10.64 10.64"><circle cx="5.3" cy="5.3" r="5.1" fill="#1c1c1c"/><path d="M3.6 2.4L8.4 5.3L3.6 8.2Z" fill="#ececec"/></svg>
<span style="left:1464.4px;top:693.84px;font:11.5px 'Liberation Sans',sans-serif;color:#bcbcbc;letter-spacing:-0.1px">track-06</span>
<div style="left:1560.44px;top:695.1px;width:11.2px;height:11.2px;box-shadow:inset 0 0 0 1.1px #5a5a5a"></div>
<div style="left:1573.88px;top:693.42px;width:0.98px;height:14.84px;background:#4c4c4c"></div>
<div style="left:1590.82px;top:693.42px;width:0.98px;height:14.84px;background:#4c4c4c"></div>
<div style="left:1607.76px;top:693.42px;width:0.98px;height:14.84px;background:#4c4c4c"></div>
<div style="left:1625.4px;top:693.42px;width:0.98px;height:14.84px;background:#4c4c4c"></div>
<div style="left:1642.34px;top:693.42px;width:0.98px;height:14.84px;background:#4c4c4c"></div>
<div style="left:1659px;top:693.42px;width:0.98px;height:14.84px;background:#4c4c4c"></div>
<svg style="left:1576.68px;top:694.26px;" width="13.44" height="13.16" viewBox="0 0 13.44 13.16"><path d="M1.2 2.8H6.8V8.4" fill="none" stroke="#f4f4f4" stroke-width="2"/><path d="M3 6.4L6.8 10.6L10.6 6.4Z" fill="#f4f4f4"/><path d="M2 12.2H12" stroke="#f4f4f4" stroke-width="1.7"/></svg>
<svg style="left:1594.6px;top:695.1px;" width="10.08" height="11.48" viewBox="0 0 10.08 11.48"><rect x="1" y="5.6" width="9.2" height="6.6" fill="#6a6a6a"/><path d="M3 6V4.2A2.6 2.6 0 0 1 8.2 4.2V6" fill="none" stroke="#6a6a6a" stroke-width="1.7"/></svg>
<svg style="left:1610.56px;top:695.94px;" width="12.88" height="9.80" viewBox="0 0 12.88 9.80"><ellipse cx="6.4" cy="4.9" rx="5.6" ry="3.9" fill="none" stroke="#f0f0f0" stroke-width="1.5"/><ellipse cx="6.4" cy="4.7" rx="2.6" ry="2.3" fill="#f0f0f0"/></svg>
<div style="left:1630.16px;top:696.78px;width:8.12px;height:8.12px;background:#5e5e5e;border-radius:50%"></div>
<span style="left:1645.84px;top:693.42px;font:bold 11.4px 'Liberation Sans',sans-serif;color:#6a6a6a">M</span>
<span style="left:1664.32px;top:693.42px;font:bold 11.4px 'Liberation Sans',sans-serif;color:#6a6a6a">S</span>
<div style="left:1677.2px;top:796.6px;width:2.8px;height:19.6px;background:#15153a"></div>
<div style="left:0px;top:1006.6px;width:1680px;height:28px;background:#272727"></div>
<div style="left:2.24px;top:1012.48px;width:22.68px;height:18.2px;background:linear-gradient(#5a5a5a,#4a4a4a);box-shadow:0 0 0 1px #2e2e2e, inset 0 1px 0 #686868"></div>
<div style="left:26.04px;top:1012.48px;width:22.68px;height:18.2px;background:linear-gradient(#5a5a5a,#4a4a4a);box-shadow:0 0 0 1px #2e2e2e, inset 0 1px 0 #686868"></div>
<div style="left:50.12px;top:1012.48px;width:22.68px;height:18.2px;background:linear-gradient(#5a5a5a,#4a4a4a);box-shadow:0 0 0 1px #2e2e2e, inset 0 1px 0 #686868"></div>
<div style="left:73.92px;top:1012.48px;width:22.68px;height:18.2px;background:linear-gradient(#5a5a5a,#4a4a4a);box-shadow:0 0 0 1px #2e2e2e, inset 0 1px 0 #686868"></div>
<div style="left:98px;top:1012.48px;width:22.68px;height:18.2px;background:linear-gradient(#5a5a5a,#4a4a4a);box-shadow:0 0 0 1px #2e2e2e, inset 0 1px 0 #686868"></div>
<div style="left:122.36px;top:1012.48px;width:22.68px;height:18.2px;background:#e07a10;box-shadow:0 0 0 1px #2e2e2e"></div>
<svg style="left:0px;top:1006.6px;" width="224.00" height="28.00" viewBox="0 0 224.00 28.00"><path d="M7.979999999999999 14.980000000000063L14.179999999999998 10.380000000000063V19.580000000000062Z" fill="#e4e4e4"/><rect x="15.779999999999998" y="10.380000000000063" width="2.4" height="9.2" fill="#e4e4e4"/><path d="M33.980000000000004 9.980000000000063L41.980000000000004 14.980000000000063L33.980000000000004 19.98000000000006Z" fill="#e4e4e4"/><rect x="57.85999999999999" y="10.780000000000062" width="2.4" height="8.4" fill="#e4e4e4"/><rect x="62.66" y="10.780000000000062" width="2.4" height="8.4" fill="#e4e4e4"/><rect x="81.35999999999999" y="11.080000000000062" width="7.8" height="7.8" fill="#e4e4e4"/><path d="M114.93999999999998 14.980000000000063L108.74 10.380000000000063V19.580000000000062Z" fill="#e4e4e4"/><rect x="104.74" y="10.380000000000063" width="2.4" height="9.2" fill="#e4e4e4"/><path d="M134.29999999999998 18.180000000000064H130.7 a3.2 3.2 0 0 1 0 -6.4 H136.7 a3.2 3.2 0 0 1 0 6.4 H136.1" fill="none" stroke="#24170a" stroke-width="1.6"/><path d="M136.89999999999998 15.780000000000063L133.7 18.28000000000006L136.89999999999998 20.78000000000006Z" fill="#24170a"/></svg>
<span style="left:159.04px;top:1013.74px;font:11.8px 'Liberation Sans',sans-serif;color:#bababa;letter-spacing:-0.1px">Grid:</span>
<div style="left:189.28px;top:1011.08px;width:52.92px;height:19.88px;background:linear-gradient(#fff,#ececec);border-radius:2.5px;box-shadow:0 0 0 1px #6a6a6a"></div>
<div style="left:191.8px;top:1013.6px;width:29.96px;height:14.84px;background:#595959"></div>
<span style="left:193.2px;top:1013.74px;font:11.6px 'Liberation Sans',sans-serif;color:#d4d4d4">1/8</span>
<svg style="left:230.16px;top:1019.2px;" width="7.56" height="4.76" viewBox="0 0 7.56 4.76"><path d="M0.2 0.4H7.4L3.8 4.4Z" fill="#111"/></svg>
<div style="left:247.8px;top:1011.08px;width:58.24px;height:19.88px;background:linear-gradient(#fff,#ececec);border-radius:2.5px;box-shadow:0 0 0 1px #6a6a6a"></div>
<span style="left:251.16px;top:1014.3px;font:11.6px 'Liberation Sans',sans-serif;color:#111;letter-spacing:-0.15px">straight</span>
<svg style="left:294px;top:1019.2px;" width="7.56" height="4.76" viewBox="0 0 7.56 4.76"><path d="M0.2 0.4H7.4L3.8 4.4Z" fill="#111"/></svg>
<span style="left:317.24px;top:1013.74px;font:11.8px 'Liberation Sans',sans-serif;color:#bababa;letter-spacing:-0.1px">Notes:</span>
<div style="left:354.76px;top:1011.08px;width:53.48px;height:19.88px;background:linear-gradient(#fff,#ececec);border-radius:2.5px;box-shadow:0 0 0 1px #6a6a6a"></div>
<div style="left:357.28px;top:1013.6px;width:31.08px;height:14.84px;background:#595959"></div>
<span style="left:358.4px;top:1013.74px;font:11.6px 'Liberation Sans',sans-serif;color:#d4d4d4;letter-spacing:-0.2px">Grid</span>
<svg style="left:396.2px;top:1019.2px;" width="7.56" height="4.76" viewBox="0 0 7.56 4.76"><path d="M0.2 0.4H7.4L3.8 4.4Z" fill="#111"/></svg>
<div style="left:423.08px;top:1013.6px;width:13.44px;height:13.72px;background:linear-gradient(135deg,#d8d8d8,#fff);box-shadow:inset 0 0 0 1.3px #8c8c8c"></div>
<span style="left:441px;top:1013.74px;font:11.8px 'Liberation Sans',sans-serif;color:#bababa;letter-spacing:-0.1px">Scale</span>
<span style="left:482.44px;top:1013.74px;font:11.8px 'Liberation Sans',sans-serif;color:#bababa;letter-spacing:-0.1px">Color:</span>
<div style="left:518.84px;top:1011.08px;width:81.76px;height:19.88px;background:linear-gradient(#fff,#ececec);border-radius:2.5px;box-shadow:0 0 0 1px #6a6a6a"></div>
<span style="left:521.92px;top:1014.3px;font:11.6px 'Liberation Sans',sans-serif;color:#111;letter-spacing:-0.2px">Velocity</span>
<svg style="left:588.84px;top:1019.2px;" width="7.56" height="4.76" viewBox="0 0 7.56 4.76"><path d="M0.2 0.4H7.4L3.8 4.4Z" fill="#111"/></svg>
<div style="left:1494.64px;top:1010.52px;width:87.36px;height:19.88px;background:linear-gradient(#fff,#ececec);border-radius:2.5px;box-shadow:0 0 0 1px #6a6a6a"></div>
<span style="left:1497.44px;top:1014.3px;font:11.6px 'Liberation Sans',sans-serif;color:#050505;letter-spacing:-0.35px">track-06</span>
<svg style="left:1570.24px;top:1018.64px;" width="7.56" height="4.76" viewBox="0 0 7.56 4.76"><path d="M0.2 0.4H7.4L3.8 4.4Z" fill="#111"/></svg>
<div style="left:1586.48px;top:1010.52px;width:87.92px;height:19.88px;background:linear-gradient(#fff,#ececec);border-radius:2.5px;box-shadow:0 0 0 1px #6a6a6a"></div>
<span style="left:1589.84px;top:1014.3px;font:11.6px 'Liberation Sans',sans-serif;color:#050505;letter-spacing:-0.5px">All channels</span>
<svg style="left:1662.36px;top:1018.64px;" width="7.56" height="4.76" viewBox="0 0 7.56 4.76"><path d="M0.2 0.4H7.4L3.8 4.4Z" fill="#111"/></svg>
<div style="left:0px;top:1034.6px;width:1680px;height:15.4px;background:#161616"></div>
<span style="left:3.64px;top:1036.56px;font:bold 10.5px 'Liberation Sans',sans-serif;color:#bbb">!</span>
<div style="left:14.56px;top:1037.4px;width:8.96px;height:9.24px;box-shadow:inset 0 0 0 1.2px #aaa"><svg style="left:0;top:0" width="100%" height="100%" viewBox="0 0 9 9"><path d="M2.6 2.6L6.4 6.4M6.4 2.6L2.6 6.4" stroke="#bbb" stroke-width="1.1"/></svg></div>
<span style="left:28px;top:1036.98px;font:bold 10.4px 'Liberation Sans',sans-serif;color:#c4c4c4;letter-spacing:-0.08px">MIDI take: untitled MIDI item</span>
<!-- p6 -->
<div style="left:3.08px;top:620.9px;width:27.86px;height:28px;background:#e07a10;box-shadow:inset 0 1px 0 #ee8c28"><svg style="left:0;top:0" width="100%" height="100%" viewBox="0 0 28 28"><path d="M11.2 3.4V11" stroke="#1e1408" stroke-width="2.2"/><path d="M7.8 9.8H14.6L11.2 14.4Z" fill="#1e1408"/><path d="M4.6 3.6V18H24" fill="none" stroke="#1e1408" stroke-width="1.4"/><path d="M5 19H13.6L12 24.4Q9.4 25.8 6.8 24.4Z" fill="#1e1408"/></svg></div>
<div style="left:33.6px;top:620.9px;width:27.86px;height:28px;background:linear-gradient(#5a5a5a,#4b4b4b);box-shadow:inset 0 1px 0 #686868, 0 0 0 1px #2c2c2c"><svg style="left:0;top:0" width="100%" height="100%" viewBox="0 0 28 28"><circle cx="13.6" cy="11.4" r="8.8" fill="#e4e4e4"/><rect x="11.6" y="15.6" width="4" height="5.4" fill="#6a6a6a"/><circle cx="8.28" cy="12.52" r="1.5" fill="#9a9a9a"/><circle cx="9.68" cy="7.48" r="1.5" fill="#9a9a9a"/><circle cx="13.60" cy="5.80" r="1.5" fill="#9a9a9a"/><circle cx="17.52" cy="7.48" r="1.5" fill="#9a9a9a"/><circle cx="18.92" cy="12.52" r="1.5" fill="#9a9a9a"/><rect x="3.4" y="23" width="3.4" height="3" fill="none" stroke="#e0e0e0" stroke-width="1.1"/><rect x="9.2" y="23" width="3.4" height="3" fill="none" stroke="#e0e0e0" stroke-width="1.1"/><rect x="15" y="23" width="3.4" height="3" fill="none" stroke="#e0e0e0" stroke-width="1.1"/><rect x="20.8" y="23" width="3.4" height="3" fill="none" stroke="#e0e0e0" stroke-width="1.1"/></svg></div>
<div style="left:63.28px;top:620.9px;width:27.86px;height:28px;background:#e07a10;box-shadow:inset 0 1px 0 #ee8c28"><svg style="left:0;top:0" width="100%" height="100%" viewBox="0 0 28 28"><path d="M8.8 13.6L13.8 5.6L18.6 12" fill="none" stroke="#2a1a08" stroke-width="1.4"/><rect x="7.2" y="12.2" width="3" height="2.8" fill="#e8a050" stroke="#2a1a08" stroke-width="1.1"/><rect x="12.4" y="4.2" width="3" height="2.8" fill="#e8a050" stroke="#2a1a08" stroke-width="1.1"/><circle cx="19" cy="11.6" r="2.3" fill="#a85a10"/><rect x="7" y="17" width="14" height="6.4" fill="#1c1c1c"/><path d="M3.4 9.6L5.8 8V11.2ZM24.6 9.6L22.2 8V11.2ZM3.4 20.2L5.8 18.6V21.8ZM24.6 20.2L22.2 18.6V21.8Z" fill="#2a1a08"/></svg></div>
<div style="left:93.52px;top:620.9px;width:27.86px;height:28px;background:#e07a10;box-shadow:inset 0 1px 0 #ee8c28"><svg style="left:0;top:0" width="100%" height="100%" viewBox="0 0 28 28"><path d="M7 21.6L7.3 13.9A5.9 5.9 0 0 1 19.1 13.9L19.4 21.6" fill="none" stroke="#141008" stroke-width="5.2"/><rect x="4.6" y="19.8" width="4.8" height="2" fill="#b86a14"/><rect x="17" y="19.8" width="4.8" height="2" fill="#b86a14"/></svg></div>
<div style="left:153.02px;top:620.9px;width:27.86px;height:28px;background:linear-gradient(#5a5a5a,#4b4b4b);box-shadow:inset 0 1px 0 #686868, 0 0 0 1px #2c2c2c"><svg style="left:0;top:0" width="100%" height="100%" viewBox="0 0 28 28"><text x="14" y="10.4" text-anchor="middle" font-family="Liberation Sans, sans-serif" font-weight="bold" font-size="10.4" fill="#dcdcdc">Q</text><rect x="4.6" y="12.6" width="5.6" height="2.4" fill="#e8e8e8"/><rect x="11.2" y="12.6" width="5.6" height="2.4" fill="#8a8a8a"/><rect x="17.8" y="12.6" width="5.6" height="2.4" fill="#8a8a8a"/><rect x="4.6" y="16.2" width="5.6" height="2.4" fill="#8a8a8a"/><rect x="11.2" y="16.2" width="5.6" height="2.4" fill="#e8e8e8"/><rect x="17.8" y="16.2" width="5.6" height="2.4" fill="#8a8a8a"/><rect x="4.6" y="19.8" width="5.6" height="2.4" fill="#8a8a8a"/><rect x="11.2" y="19.8" width="5.6" height="2.4" fill="#8a8a8a"/><rect x="17.8" y="19.8" width="5.6" height="2.4" fill="#e8e8e8"/><rect x="4.6" y="23.2" width="5.6" height="2.4" fill="#7a7a7a"/><rect x="11.2" y="23.2" width="5.6" height="2.4" fill="#7a7a7a"/><rect x="17.8" y="23.2" width="5.6" height="2.4" fill="#7a7a7a"/></svg></div>
<div style="left:183.54px;top:620.9px;width:27.86px;height:28px;background:linear-gradient(#5a5a5a,#4b4b4b);box-shadow:inset 0 1px 0 #686868, 0 0 0 1px #2c2c2c"><svg style="left:0;top:0" width="100%" height="100%" viewBox="0 0 28 28"><text x="14" y="10.4" text-anchor="middle" font-family="Liberation Sans, sans-serif" font-weight="bold" font-size="10.4" fill="#dcdcdc">H</text><rect x="4.4" y="12.8" width="5" height="2.6" fill="#e8e8e8"/><rect x="13.8" y="13.4" width="5" height="2.6" fill="#e8e8e8"/><rect x="8.8" y="16.8" width="8" height="2.6" fill="#e8e8e8"/><rect x="5.8" y="20.6" width="4.6" height="2.6" fill="#e8e8e8"/><rect x="12.6" y="21.2" width="6.4" height="2.6" fill="#e8e8e8"/><path d="M9 15L12 17M16 15.6L14 17.2M11 19.6L9 21M15 19.6L16.4 21.4" stroke="#bbb" stroke-width="1"/></svg></div>
<div style="left:242.9px;top:620.9px;width:27.86px;height:28px;background:linear-gradient(#5a5a5a,#4b4b4b);box-shadow:inset 0 1px 0 #686868, 0 0 0 1px #2c2c2c"><svg style="left:0;top:0" width="100%" height="100%" viewBox="0 0 28 28"><path d="M11 7.6V18.8L13.6 16.4L15.4 20.6L17 19.8L15.2 15.8H18.8Z" fill="#d4d4d4"/></svg></div>
<div style="left:273.56px;top:620.9px;width:27.86px;height:28px;background:#e07a10;box-shadow:inset 0 1px 0 #ee8c28"><svg style="left:0;top:0" width="100%" height="100%" viewBox="0 0 28 28"><path d="M9 19L10 15.8L17.2 8.6L19.6 11L12.2 18.2Z" fill="none" stroke="#1e1408" stroke-width="1.35" stroke-linejoin="round"/><path d="M11 17L18 10" stroke="#1e1408" stroke-width=".8"/></svg></div>
<div style="left:302.96px;top:620.9px;width:27.86px;height:28px;background:linear-gradient(#5a5a5a,#4b4b4b);box-shadow:inset 0 1px 0 #686868, 0 0 0 1px #2c2c2c"><svg style="left:0;top:0" width="100%" height="100%" viewBox="0 0 28 28"><path d="M21.6 6L12.4 15.8" stroke="#dcdcdc" stroke-width="2.1" stroke-linecap="round"/><path d="M5 21.6Q8.6 19.6 10 15.2L14 18.4Q11.8 22.4 5 21.6Z" fill="#e0e0e0"/></svg></div>
<div style="left:333.2px;top:620.9px;width:27.86px;height:28px;background:linear-gradient(#5a5a5a,#4b4b4b);box-shadow:inset 0 1px 0 #686868, 0 0 0 1px #2c2c2c"><svg style="left:0;top:0" width="100%" height="100%" viewBox="0 0 28 28"><path d="M7 17L12.4 9.6H21L15.8 17Z" fill="none" stroke="#e0e0e0" stroke-width="1.5" stroke-linejoin="round"/><path d="M7 17V19.6H15.8L21 12.4V9.6M15.8 17V19.6" fill="none" stroke="#e0e0e0" stroke-width="1.3" stroke-linejoin="round"/></svg></div>
<div style="left:393.26px;top:620.9px;width:27.86px;height:28px;background:linear-gradient(#5a5a5a,#4b4b4b);box-shadow:inset 0 1px 0 #686868, 0 0 0 1px #2c2c2c"><svg style="left:0;top:0" width="100%" height="100%" viewBox="0 0 28 28"><text x="14" y="11.6" text-anchor="middle" font-family="Liberation Sans, sans-serif" font-weight="bold" font-size="10.6" fill="#dcdcdc">1</text><path d="M7.4 13.9H20.6" stroke="#dcdcdc" stroke-width="1.5"/><text x="14" y="24.6" text-anchor="middle" font-family="Liberation Sans, sans-serif" font-weight="bold" font-size="10.6" fill="#dcdcdc">1</text></svg></div>
<div style="left:423.22px;top:620.9px;width:27.86px;height:28px;background:linear-gradient(#5a5a5a,#4b4b4b);box-shadow:inset 0 1px 0 #686868, 0 0 0 1px #2c2c2c"><svg style="left:0;top:0" width="100%" height="100%" viewBox="0 0 28 28"><text x="14" y="11.6" text-anchor="middle" font-family="Liberation Sans, sans-serif" font-weight="bold" font-size="10.6" fill="#dcdcdc">1</text><path d="M7.4 13.9H20.6" stroke="#dcdcdc" stroke-width="1.5"/><text x="14" y="24.6" text-anchor="middle" font-family="Liberation Sans, sans-serif" font-weight="bold" font-size="10.6" fill="#dcdcdc">2</text></svg></div>
<div style="left:453.18px;top:620.9px;width:27.86px;height:28px;background:linear-gradient(#5a5a5a,#4b4b4b);box-shadow:inset 0 1px 0 #686868, 0 0 0 1px #2c2c2c"><svg style="left:0;top:0" width="100%" height="100%" viewBox="0 0 28 28"><text x="14" y="11.6" text-anchor="middle" font-family="Liberation Sans, sans-serif" font-weight="bold" font-size="10.6" fill="#dcdcdc">1</text><path d="M7.4 13.9H20.6" stroke="#dcdcdc" stroke-width="1.5"/><text x="14" y="24.6" text-anchor="middle" font-family="Liberation Sans, sans-serif" font-weight="bold" font-size="10.6" fill="#dcdcdc">4</text></svg></div>
<div style="left:483.14px;top:620.9px;width:27.86px;height:28px;background:linear-gradient(#5a5a5a,#4b4b4b);box-shadow:inset 0 1px 0 #686868, 0 0 0 1px #2c2c2c"><svg style="left:0;top:0" width="100%" height="100%" viewBox="0 0 28 28"><text x="14" y="11.6" text-anchor="middle" font-family="Liberation Sans, sans-serif" font-weight="bold" font-size="10.6" fill="#dcdcdc">1</text><path d="M7.4 13.9H20.6" stroke="#dcdcdc" stroke-width="1.5"/><text x="14" y="24.6" text-anchor="middle" font-family="Liberation Sans, sans-serif" font-weight="bold" font-size="10.6" fill="#dcdcdc">8</text></svg></div>
<div style="left:513.1px;top:620.9px;width:27.86px;height:28px;background:linear-gradient(#5a5a5a,#4b4b4b);box-shadow:inset 0 1px 0 #686868, 0 0 0 1px #2c2c2c"><svg style="left:0;top:0" width="100%" height="100%" viewBox="0 0 28 28"><text x="14" y="11.6" text-anchor="middle" font-family="Liberation Sans, sans-serif" font-weight="bold" font-size="10.6" fill="#dcdcdc">1</text><path d="M7.4 13.9H20.6" stroke="#dcdcdc" stroke-width="1.5"/><text x="14" y="24.6" text-anchor="middle" font-family="Liberation Sans, sans-serif" font-weight="bold" font-size="10.6" fill="#dcdcdc">16</text></svg></div>
<div style="left:543.2px;top:620.9px;width:27.86px;height:28px;background:linear-gradient(#5a5a5a,#4b4b4b);box-shadow:inset 0 1px 0 #686868, 0 0 0 1px #2c2c2c"><svg style="left:0;top:0" width="100%" height="100%" viewBox="0 0 28 28"><text x="14" y="11.6" text-anchor="middle" font-family="Liberation Sans, sans-serif" font-weight="bold" font-size="10.6" fill="#dcdcdc">1</text><path d="M7.4 13.9H20.6" stroke="#dcdcdc" stroke-width="1.5"/><text x="14" y="24.6" text-anchor="middle" font-family="Liberation Sans, sans-serif" font-weight="bold" font-size="10.6" fill="#dcdcdc">32</text></svg></div>
<div style="left:602.98px;top:620.9px;width:27.86px;height:28px;background:#e07a10;box-shadow:inset 0 1px 0 #ee8c28"><svg style="left:0;top:0" width="100%" height="100%" viewBox="0 0 28 28"><ellipse cx="14" cy="6.6" rx="6.8" ry="3.5" fill="none" stroke="#1e1408" stroke-width="1.3"/><ellipse cx="14" cy="6.199999999999999" rx="2.9" ry="2.4" fill="#1e1408"/><rect x="7.4" y="16.8" width="13.4" height="3.6" fill="#1e1408"/></svg></div>
<div style="left:633.22px;top:620.9px;width:27.86px;height:28px;background:linear-gradient(#5a5a5a,#4b4b4b);box-shadow:inset 0 1px 0 #686868, 0 0 0 1px #2c2c2c"><svg style="left:0;top:0" width="100%" height="100%" viewBox="0 0 28 28"><ellipse cx="14" cy="6.6" rx="6.8" ry="3.5" fill="none" stroke="#e4e4e4" stroke-width="1.3"/><ellipse cx="14" cy="6.199999999999999" rx="2.9" ry="2.4" fill="#bcbcbc"/><path d="M12 15.6L16.6 18.6L12 21.6Z" fill="#f0f0f0"/></svg></div>
<div style="left:663.32px;top:620.9px;width:27.86px;height:28px;background:linear-gradient(#5a5a5a,#4b4b4b);box-shadow:inset 0 1px 0 #686868, 0 0 0 1px #2c2c2c"><svg style="left:0;top:0" width="100%" height="100%" viewBox="0 0 28 28"><ellipse cx="14" cy="6.6" rx="6.8" ry="3.5" fill="none" stroke="#e4e4e4" stroke-width="1.3"/><ellipse cx="14" cy="6.199999999999999" rx="2.9" ry="2.4" fill="#bcbcbc"/><path d="M14 14.6L16.8 18.6L14 22.6L11.2 18.6Z" fill="#f0f0f0"/></svg></div>
<div style="left:722.82px;top:620.9px;width:27.86px;height:28px;background:#e07a10;box-shadow:inset 0 1px 0 #ee8c28"><svg style="left:0;top:0" width="100%" height="100%" viewBox="0 0 28 28"><ellipse cx="14" cy="6.6" rx="6.8" ry="3.5" fill="none" stroke="#1e1408" stroke-width="1.3"/><ellipse cx="14" cy="6.199999999999999" rx="2.9" ry="2.4" fill="#1e1408"/><path d="M14.2 12.6V22.0" stroke="#1e1408" stroke-width="1.3"/><ellipse cx="12.5" cy="22.2" rx="2.2" ry="1.7" fill="#1e1408" transform="rotate(-25 12.5 22.2)"/></svg></div>
<div style="left:752.92px;top:620.9px;width:27.86px;height:28px;background:#e07a10;box-shadow:inset 0 1px 0 #ee8c28"><svg style="left:0;top:0" width="100%" height="100%" viewBox="0 0 28 28"><ellipse cx="14" cy="6.6" rx="6.8" ry="3.5" fill="none" stroke="#1e1408" stroke-width="1.3"/><ellipse cx="14" cy="6.199999999999999" rx="2.9" ry="2.4" fill="#1e1408"/><rect x="4.6" y="15.4" width="18" height="7" fill="#141414"/><text x="13.4" y="21.2" text-anchor="middle" font-family="Liberation Sans, sans-serif" font-size="6.6" font-weight="bold" fill="#e8a860">C3</text></svg></div>
<div style="left:783.02px;top:620.9px;width:27.86px;height:28px;background:linear-gradient(#5a5a5a,#4b4b4b);box-shadow:inset 0 1px 0 #686868, 0 0 0 1px #2c2c2c"><svg style="left:0;top:0" width="100%" height="100%" viewBox="0 0 28 28"><ellipse cx="13.4" cy="6.6" rx="6.8" ry="3.5" fill="none" stroke="#e4e4e4" stroke-width="1.3"/><ellipse cx="13.4" cy="6.199999999999999" rx="2.9" ry="2.4" fill="#bcbcbc"/><path d="M24.2 9V18.4" stroke="#e4e4e4" stroke-width="1.3"/><ellipse cx="22.5" cy="18.6" rx="2.2" ry="1.7" fill="#e4e4e4" transform="rotate(-25 22.5 18.6)"/><path d="M20.599999999999998 21.4L24.2 25.0M24.2 21.4L20.599999999999998 25.0" stroke="#e0e0e0" stroke-width="1.2"/></svg></div>
<div style="left:812.98px;top:620.9px;width:27.86px;height:28px;background:linear-gradient(#5a5a5a,#4b4b4b);box-shadow:inset 0 1px 0 #686868, 0 0 0 1px #2c2c2c"><svg style="left:0;top:0" width="100%" height="100%" viewBox="0 0 28 28"><ellipse cx="13.4" cy="6.6" rx="6.8" ry="3.5" fill="none" stroke="#e4e4e4" stroke-width="1.3"/><ellipse cx="13.4" cy="6.199999999999999" rx="2.9" ry="2.4" fill="#bcbcbc"/><path d="M24.8 9V18.4" stroke="#e4e4e4" stroke-width="1.3"/><ellipse cx="23.1" cy="18.6" rx="2.2" ry="1.7" fill="#e4e4e4" transform="rotate(-25 23.1 18.6)"/><path d="M21.2 21.4L24.8 25.0M24.8 21.4L21.2 25.0" stroke="#e0e0e0" stroke-width="1.2"/><text x="3.4" y="18.2" font-family="Liberation Sans, sans-serif" font-size="6.8" fill="#e4e4e4">abc</text><path d="M6.8 21.4L10.4 25.0M10.4 21.4L6.8 25.0" stroke="#e0e0e0" stroke-width="1.2"/></svg></div>
<div style="left:872.9px;top:620.9px;width:27.86px;height:28px;background:linear-gradient(#5a5a5a,#4b4b4b);box-shadow:inset 0 1px 0 #686868, 0 0 0 1px #2c2c2c"><svg style="left:0;top:0" width="100%" height="100%" viewBox="0 0 28 28"><rect x="4.2" y="20.5" width="2.5" height="3.8" fill="#e4e4e4"/><rect x="8.6" y="18.5" width="2.5" height="5.8" fill="#e4e4e4"/><rect x="13.0" y="15.7" width="2.5" height="8.6" fill="#e4e4e4"/><rect x="17.4" y="12.9" width="2.5" height="11.4" fill="#e4e4e4"/><rect x="21.8" y="10.1" width="2.5" height="14.2" fill="#e4e4e4"/></svg></div>
</div></body></html>
